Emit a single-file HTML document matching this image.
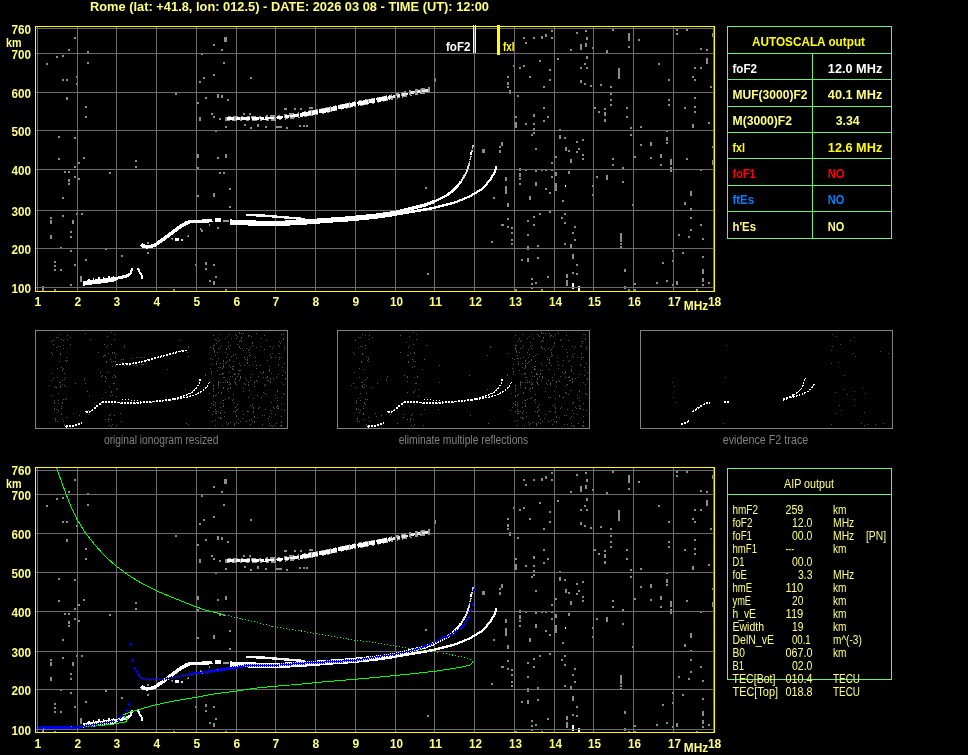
<!DOCTYPE html>
<html lang="en"><head><meta charset="utf-8"><title>Ionogram - Rome - AUTOSCALA / AIP output</title>
<style>html,body{margin:0;padding:0;background:#000;overflow:hidden}svg{display:block;font-family:"Liberation Sans",sans-serif;font-size:12px;font-weight:700;will-change:transform;-webkit-font-smoothing:antialiased}</style></head><body>
<svg width="968" height="755" viewBox="0 0 968 755">
<rect x="0" y="0" width="968" height="755" fill="#000"/>
<text x="90" y="11" fill="#ffff80" textLength="399" lengthAdjust="spacingAndGlyphs">Rome (lat: +41.8, lon: 012.5) - DATE: 2026 03 08 - TIME (UT): 12:00</text>
<!-- top ionogram -->
<g shape-rendering="crispEdges" fill="#8c8c8c">
<rect x="523" y="37" width="1.5" height="1.6"/>
<rect x="525" y="42" width="1.5" height="1.6"/>
<rect x="533" y="37" width="1.5" height="1.6"/>
<rect x="541" y="36" width="1.5" height="3"/>
<rect x="545" y="34" width="1.5" height="3"/>
<rect x="551" y="30" width="1.5" height="1.6"/>
<rect x="551" y="37" width="1.5" height="1.6"/>
<rect x="576" y="32" width="1.5" height="1.6"/>
<rect x="585" y="30" width="1.5" height="1.6"/>
<rect x="586" y="37" width="1.5" height="3"/>
<rect x="580" y="44" width="1.5" height="6"/>
<rect x="585" y="43" width="1.5" height="4"/>
<rect x="570" y="49" width="1.5" height="1.6"/>
<rect x="592" y="47" width="1.5" height="1.6"/>
<rect x="612" y="29" width="1.5" height="1.6"/>
<rect x="628" y="33" width="1.5" height="8"/>
<rect x="628" y="46" width="1.5" height="1.6"/>
<rect x="606" y="50" width="1.5" height="3"/>
<rect x="638" y="39" width="1.5" height="1.6"/>
<rect x="676" y="29" width="1.5" height="1.6"/>
<rect x="676" y="33" width="1.5" height="1.6"/>
<rect x="686" y="29" width="1.5" height="1.6"/>
<rect x="700" y="48" width="1.5" height="1.6"/>
<rect x="706" y="49" width="1.5" height="1.6"/>
<rect x="712" y="33" width="1.5" height="4"/>
<rect x="513" y="65" width="1.5" height="1.6"/>
<rect x="519" y="67" width="1.5" height="1.6"/>
<rect x="523" y="65" width="1.5" height="1.6"/>
<rect x="539" y="60" width="1.5" height="1.6"/>
<rect x="549" y="69" width="1.5" height="1.6"/>
<rect x="529" y="76" width="1.5" height="1.6"/>
<rect x="549" y="79" width="1.5" height="1.6"/>
<rect x="543" y="86" width="1.5" height="1.6"/>
<rect x="507" y="76" width="1.5" height="1.6"/>
<rect x="507" y="82" width="1.5" height="3"/>
<rect x="507" y="86" width="1.5" height="1.6"/>
<rect x="509" y="90" width="1.5" height="4"/>
<rect x="557" y="58" width="1.5" height="1.6"/>
<rect x="586" y="56" width="1.5" height="3"/>
<rect x="584" y="63" width="1.5" height="1.6"/>
<rect x="580" y="67" width="1.5" height="1.6"/>
<rect x="586" y="67" width="1.5" height="1.6"/>
<rect x="580" y="80" width="1.5" height="3"/>
<rect x="584" y="83" width="1.5" height="1.6"/>
<rect x="590" y="85" width="1.5" height="1.6"/>
<rect x="618" y="68" width="1.5" height="9"/>
<rect x="618" y="77" width="1.5" height="1.6"/>
<rect x="600" y="84" width="1.5" height="1.6"/>
<rect x="610" y="86" width="1.5" height="1.6"/>
<rect x="658" y="63" width="1.5" height="1.6"/>
<rect x="668" y="79" width="1.5" height="1.6"/>
<rect x="706" y="58" width="1.5" height="6"/>
<rect x="700" y="67" width="1.5" height="1.6"/>
<rect x="694" y="67" width="1.5" height="1.6"/>
<rect x="692" y="76" width="1.5" height="1.6"/>
<rect x="694" y="79" width="1.5" height="1.6"/>
<rect x="710" y="86" width="1.5" height="1.6"/>
<rect x="517" y="95" width="1.5" height="1.6"/>
<rect x="543" y="107" width="1.5" height="1.6"/>
<rect x="533" y="114" width="1.5" height="3"/>
<rect x="547" y="116" width="1.5" height="1.6"/>
<rect x="543" y="120" width="1.5" height="1.6"/>
<rect x="515" y="116" width="1.5" height="1.6"/>
<rect x="515" y="122" width="1.5" height="6"/>
<rect x="525" y="123" width="1.5" height="1.6"/>
<rect x="533" y="123" width="1.5" height="1.6"/>
<rect x="533" y="128" width="1.5" height="3"/>
<rect x="610" y="93" width="1.5" height="1.6"/>
<rect x="610" y="99" width="1.5" height="1.6"/>
<rect x="610" y="104" width="1.5" height="1.6"/>
<rect x="594" y="107" width="1.5" height="1.6"/>
<rect x="598" y="111" width="1.5" height="1.6"/>
<rect x="604" y="108" width="1.5" height="1.6"/>
<rect x="604" y="112" width="1.5" height="4"/>
<rect x="604" y="119" width="1.5" height="3"/>
<rect x="626" y="107" width="1.5" height="1.6"/>
<rect x="626" y="116" width="1.5" height="1.6"/>
<rect x="630" y="127" width="1.5" height="1.6"/>
<rect x="640" y="126" width="1.5" height="1.6"/>
<rect x="668" y="99" width="1.5" height="1.6"/>
<rect x="668" y="104" width="1.5" height="1.6"/>
<rect x="694" y="97" width="1.5" height="1.6"/>
<rect x="694" y="106" width="1.5" height="1.6"/>
<rect x="694" y="111" width="1.5" height="1.6"/>
<rect x="684" y="107" width="1.5" height="1.6"/>
<rect x="692" y="124" width="1.5" height="4"/>
<rect x="708" y="122" width="1.5" height="1.6"/>
<rect x="483" y="149" width="1.5" height="4"/>
<rect x="501" y="142" width="1.5" height="4"/>
<rect x="499" y="146" width="1.5" height="1.6"/>
<rect x="499" y="150" width="1.5" height="1.6"/>
<rect x="531" y="134" width="1.5" height="1.6"/>
<rect x="533" y="132" width="1.5" height="1.6"/>
<rect x="535" y="148" width="1.5" height="1.6"/>
<rect x="551" y="162" width="1.5" height="1.6"/>
<rect x="559" y="129" width="1.5" height="1.6"/>
<rect x="559" y="135" width="1.5" height="4"/>
<rect x="564" y="137" width="1.5" height="1.6"/>
<rect x="576" y="141" width="1.5" height="1.6"/>
<rect x="582" y="139" width="1.5" height="1.6"/>
<rect x="565" y="147" width="1.5" height="4"/>
<rect x="568" y="150" width="1.5" height="1.6"/>
<rect x="578" y="148" width="1.5" height="1.6"/>
<rect x="576" y="151" width="1.5" height="1.6"/>
<rect x="582" y="154" width="1.5" height="1.6"/>
<rect x="582" y="158" width="1.5" height="1.6"/>
<rect x="570" y="159" width="1.5" height="4"/>
<rect x="555" y="156" width="1.5" height="1.6"/>
<rect x="630" y="134" width="1.5" height="1.6"/>
<rect x="612" y="158" width="1.5" height="1.6"/>
<rect x="612" y="164" width="1.5" height="1.6"/>
<rect x="622" y="167" width="1.5" height="1.6"/>
<rect x="634" y="156" width="1.5" height="1.6"/>
<rect x="640" y="144" width="1.5" height="1.6"/>
<rect x="650" y="142" width="1.5" height="4"/>
<rect x="650" y="157" width="1.5" height="1.6"/>
<rect x="660" y="154" width="1.5" height="4"/>
<rect x="660" y="164" width="1.5" height="1.6"/>
<rect x="666" y="130" width="1.5" height="1.6"/>
<rect x="666" y="137" width="1.5" height="4"/>
<rect x="666" y="142" width="1.5" height="1.6"/>
<rect x="670" y="159" width="1.5" height="6"/>
<rect x="670" y="167" width="1.5" height="4"/>
<rect x="670" y="170" width="1.5" height="1.6"/>
<rect x="686" y="158" width="1.5" height="1.6"/>
<rect x="712" y="146" width="1.5" height="1.6"/>
<rect x="712" y="160" width="1.5" height="5"/>
<rect x="519" y="168" width="1.5" height="3"/>
<rect x="519" y="173" width="1.5" height="4"/>
<rect x="519" y="178" width="1.5" height="1.6"/>
<rect x="519" y="183" width="1.5" height="1.6"/>
<rect x="525" y="169" width="1.5" height="1.6"/>
<rect x="535" y="170" width="1.5" height="1.6"/>
<rect x="541" y="169" width="1.5" height="1.6"/>
<rect x="545" y="169" width="1.5" height="1.6"/>
<rect x="551" y="169" width="1.5" height="1.6"/>
<rect x="551" y="176" width="1.5" height="1.6"/>
<rect x="535" y="182" width="1.5" height="4"/>
<rect x="545" y="188" width="1.5" height="1.6"/>
<rect x="549" y="192" width="1.5" height="1.6"/>
<rect x="529" y="196" width="1.5" height="4"/>
<rect x="505" y="177" width="1.5" height="4"/>
<rect x="505" y="186" width="1.5" height="6"/>
<rect x="505" y="192" width="1.5" height="1.6"/>
<rect x="507" y="203" width="1.5" height="4"/>
<rect x="493" y="197" width="1.5" height="1.6"/>
<rect x="555" y="172" width="1.5" height="4"/>
<rect x="555" y="183" width="1.5" height="8"/>
<rect x="568" y="171" width="1.5" height="3"/>
<rect x="562" y="200" width="1.5" height="1.6"/>
<rect x="596" y="176" width="1.5" height="1.6"/>
<rect x="606" y="175" width="1.5" height="5"/>
<rect x="592" y="185" width="1.5" height="1.6"/>
<rect x="592" y="194" width="1.5" height="1.6"/>
<rect x="622" y="181" width="1.5" height="1.6"/>
<rect x="690" y="191" width="1.5" height="5"/>
<rect x="700" y="169" width="1.5" height="1.6"/>
<rect x="684" y="203" width="1.5" height="1.6"/>
<rect x="632" y="204" width="1.5" height="1.6"/>
<rect x="507" y="218" width="1.5" height="1.6"/>
<rect x="501" y="224" width="3" height="1.6"/>
<rect x="507" y="226" width="1.5" height="1.6"/>
<rect x="511" y="227" width="1.5" height="1.6"/>
<rect x="511" y="232" width="1.5" height="1.6"/>
<rect x="511" y="239" width="1.5" height="1.6"/>
<rect x="511" y="243" width="1.5" height="1.6"/>
<rect x="491" y="241" width="1.5" height="1.6"/>
<rect x="527" y="220" width="1.5" height="1.6"/>
<rect x="533" y="216" width="1.5" height="1.6"/>
<rect x="539" y="213" width="1.5" height="1.6"/>
<rect x="549" y="211" width="1.5" height="1.6"/>
<rect x="533" y="224" width="1.5" height="1.6"/>
<rect x="527" y="234" width="1.5" height="1.6"/>
<rect x="527" y="246" width="1.5" height="1.6"/>
<rect x="537" y="245" width="1.5" height="1.6"/>
<rect x="527" y="248" width="1.5" height="1.6"/>
<rect x="521" y="259" width="1.5" height="1.6"/>
<rect x="527" y="258" width="1.5" height="4"/>
<rect x="537" y="257" width="1.5" height="1.6"/>
<rect x="531" y="278" width="1.5" height="1.6"/>
<rect x="535" y="282" width="1.5" height="1.6"/>
<rect x="531" y="283" width="1.5" height="1.6"/>
<rect x="547" y="276" width="1.5" height="1.6"/>
<rect x="515" y="289" width="1.5" height="1.6"/>
<rect x="531" y="287" width="1.5" height="1.6"/>
<rect x="541" y="289" width="1.5" height="1.6"/>
<rect x="564" y="213" width="1.5" height="1.6"/>
<rect x="561" y="217" width="1.5" height="1.6"/>
<rect x="564" y="222" width="1.5" height="1.6"/>
<rect x="574" y="226" width="1.5" height="1.6"/>
<rect x="572" y="232" width="1.5" height="1.6"/>
<rect x="574" y="239" width="1.5" height="1.6"/>
<rect x="570" y="244" width="1.5" height="4"/>
<rect x="564" y="243" width="1.5" height="1.6"/>
<rect x="572" y="254" width="1.5" height="5"/>
<rect x="576" y="264" width="1.5" height="1.6"/>
<rect x="572" y="272" width="1.5" height="1.6"/>
<rect x="576" y="273" width="1.5" height="1.6"/>
<rect x="566" y="274" width="1.5" height="4"/>
<rect x="566" y="280" width="1.5" height="6"/>
<rect x="620" y="233" width="1.5" height="9"/>
<rect x="620" y="243" width="1.5" height="1.6"/>
<rect x="620" y="246" width="1.5" height="1.6"/>
<rect x="624" y="269" width="1.5" height="3"/>
<rect x="624" y="286" width="1.5" height="3"/>
<rect x="628" y="289" width="1.5" height="1.6"/>
<rect x="634" y="283" width="1.5" height="1.6"/>
<rect x="634" y="289" width="1.5" height="1.6"/>
<rect x="656" y="282" width="1.5" height="1.6"/>
<rect x="662" y="262" width="1.5" height="1.6"/>
<rect x="666" y="280" width="1.5" height="1.6"/>
<rect x="672" y="250" width="1.5" height="1.6"/>
<rect x="672" y="260" width="1.5" height="1.6"/>
<rect x="672" y="284" width="1.5" height="1.6"/>
<rect x="676" y="281" width="1.5" height="4"/>
<rect x="682" y="252" width="1.5" height="1.6"/>
<rect x="678" y="234" width="1.5" height="1.6"/>
<rect x="688" y="236" width="1.5" height="1.6"/>
<rect x="690" y="229" width="1.5" height="1.6"/>
<rect x="690" y="217" width="1.5" height="1.6"/>
<rect x="700" y="224" width="1.5" height="1.6"/>
<rect x="702" y="238" width="1.5" height="1.6"/>
<rect x="702" y="256" width="1.5" height="1.6"/>
<rect x="702" y="269" width="1.5" height="5"/>
<rect x="702" y="278" width="1.5" height="4"/>
<rect x="702" y="284" width="1.5" height="1.6"/>
<rect x="708" y="282" width="1.5" height="1.6"/>
<rect x="696" y="289" width="1.5" height="1.6"/>
<rect x="690" y="208" width="1.5" height="1.6"/>
<rect x="684" y="202" width="1.5" height="1.6"/>
<rect x="74" y="37" width="1.5" height="1.6"/>
<rect x="68" y="49" width="1.5" height="1.6"/>
<rect x="87" y="51" width="1.5" height="1.6"/>
<rect x="56" y="56" width="1.5" height="1.6"/>
<rect x="62" y="55" width="1.5" height="1.6"/>
<rect x="46" y="63" width="1.5" height="1.6"/>
<rect x="87" y="62" width="1.5" height="1.6"/>
<rect x="62" y="79" width="1.5" height="1.6"/>
<rect x="66" y="79" width="1.5" height="1.6"/>
<rect x="76" y="76" width="1.5" height="1.6"/>
<rect x="76" y="83" width="1.5" height="1.6"/>
<rect x="66" y="97" width="1.5" height="3"/>
<rect x="85" y="106" width="1.5" height="1.6"/>
<rect x="85" y="116" width="1.5" height="1.6"/>
<rect x="175" y="93" width="1.5" height="1.6"/>
<rect x="224" y="37" width="3" height="5"/>
<rect x="213" y="44" width="1.5" height="1.6"/>
<rect x="221" y="49" width="1.5" height="1.6"/>
<rect x="201" y="53" width="1.5" height="1.6"/>
<rect x="223" y="62" width="1.5" height="1.6"/>
<rect x="213" y="74" width="1.5" height="1.6"/>
<rect x="203" y="77" width="1.5" height="1.6"/>
<rect x="199" y="81" width="1.5" height="1.6"/>
<rect x="217" y="94" width="1.5" height="4"/>
<rect x="221" y="95" width="1.5" height="1.6"/>
<rect x="205" y="97" width="1.5" height="1.6"/>
<rect x="227" y="99" width="1.5" height="1.6"/>
<rect x="197" y="102" width="1.5" height="1.6"/>
<rect x="211" y="113" width="1.5" height="1.6"/>
<rect x="213" y="116" width="1.5" height="1.6"/>
<rect x="199" y="117" width="1.5" height="4"/>
<rect x="219" y="118" width="1.5" height="1.6"/>
<rect x="225" y="117" width="1.5" height="4"/>
<rect x="58" y="136" width="1.5" height="1.6"/>
<rect x="74" y="137" width="1.5" height="1.6"/>
<rect x="58" y="158" width="1.5" height="1.6"/>
<rect x="83" y="157" width="1.5" height="1.6"/>
<rect x="78" y="162" width="1.5" height="1.6"/>
<rect x="74" y="166" width="1.5" height="1.6"/>
<rect x="64" y="171" width="1.5" height="1.6"/>
<rect x="68" y="171" width="1.5" height="1.6"/>
<rect x="74" y="176" width="1.5" height="1.6"/>
<rect x="78" y="178" width="1.5" height="1.6"/>
<rect x="68" y="179" width="1.5" height="3"/>
<rect x="68" y="183" width="1.5" height="1.6"/>
<rect x="109" y="172" width="1.5" height="1.6"/>
<rect x="135" y="160" width="1.5" height="1.6"/>
<rect x="135" y="166" width="1.5" height="1.6"/>
<rect x="62" y="197" width="1.5" height="1.6"/>
<rect x="50" y="217" width="1.5" height="1.6"/>
<rect x="50" y="220" width="1.5" height="4"/>
<rect x="62" y="215" width="1.5" height="1.6"/>
<rect x="72" y="220" width="1.5" height="4"/>
<rect x="76" y="213" width="1.5" height="1.6"/>
<rect x="81" y="213" width="1.5" height="1.6"/>
<rect x="70" y="231" width="1.5" height="1.6"/>
<rect x="70" y="236" width="1.5" height="1.6"/>
<rect x="50" y="235" width="1.5" height="4"/>
<rect x="60" y="247" width="1.5" height="1.6"/>
<rect x="70" y="250" width="1.5" height="1.6"/>
<rect x="105" y="248" width="1.5" height="1.6"/>
<rect x="121" y="255" width="1.5" height="1.6"/>
<rect x="85" y="259" width="1.5" height="1.6"/>
<rect x="54" y="261" width="1.5" height="1.6"/>
<rect x="54" y="265" width="1.5" height="1.6"/>
<rect x="54" y="269" width="1.5" height="1.6"/>
<rect x="60" y="269" width="1.5" height="1.6"/>
<rect x="74" y="264" width="1.5" height="1.6"/>
<rect x="80" y="276" width="1.5" height="6"/>
<rect x="70" y="284" width="1.5" height="1.6"/>
<rect x="42" y="286" width="1.5" height="5"/>
<rect x="54" y="289" width="1.5" height="1.6"/>
<rect x="147" y="242" width="1.5" height="1.6"/>
<rect x="147" y="252" width="1.5" height="1.6"/>
<rect x="197" y="154" width="1.5" height="4"/>
<rect x="197" y="167" width="1.5" height="1.6"/>
<rect x="217" y="157" width="1.5" height="1.6"/>
<rect x="225" y="154" width="1.5" height="4"/>
<rect x="219" y="172" width="1.5" height="1.6"/>
<rect x="223" y="172" width="1.5" height="1.6"/>
<rect x="229" y="188" width="1.5" height="1.6"/>
<rect x="213" y="193" width="1.5" height="4"/>
<rect x="197" y="195" width="1.5" height="1.6"/>
<rect x="229" y="206" width="1.5" height="1.6"/>
<rect x="195" y="264" width="1.5" height="1.6"/>
<rect x="205" y="262" width="1.5" height="1.6"/>
<rect x="205" y="268" width="1.5" height="1.6"/>
<rect x="213" y="264" width="1.5" height="1.6"/>
<rect x="215" y="276" width="1.5" height="1.6"/>
<rect x="209" y="280" width="1.5" height="1.6"/>
<rect x="213" y="281" width="1.5" height="4"/>
<rect x="173" y="289" width="1.5" height="1.6"/>
<rect x="225" y="289" width="1.5" height="1.6"/>
<rect x="205" y="97" width="1.5" height="1.6"/>
<rect x="217" y="94" width="1.5" height="1.6"/>
<rect x="221" y="96" width="1.5" height="1.6"/>
<rect x="211" y="113" width="1.5" height="1.6"/>
<rect x="225" y="117" width="1.5" height="1.6"/>
<rect x="225" y="126" width="1.5" height="1.6"/>
<rect x="215" y="130" width="1.5" height="1.6"/>
<rect x="225" y="154" width="1.5" height="3"/>
<rect x="217" y="157" width="1.5" height="1.6"/>
<rect x="219" y="172" width="1.5" height="1.6"/>
<rect x="223" y="172" width="1.5" height="1.6"/>
<rect x="229" y="188" width="1.5" height="1.6"/>
<rect x="213" y="193" width="1.5" height="4"/>
<rect x="229" y="206" width="1.5" height="1.6"/>
<rect x="201" y="230" width="1.5" height="1.6"/>
<rect x="217" y="227" width="1.5" height="1.6"/>
<rect x="205" y="263" width="1.5" height="1.6"/>
<rect x="213" y="264" width="1.5" height="1.6"/>
<rect x="425" y="187" width="1.5" height="1.6"/>
<rect x="244" y="124" width="1.5" height="1.6"/>
<rect x="250" y="127" width="1.5" height="1.6"/>
<rect x="257" y="124" width="1.5" height="3"/>
<rect x="265" y="126" width="1.5" height="1.6"/>
<rect x="276" y="126" width="6" height="1.6"/>
<rect x="286" y="127" width="1.5" height="1.6"/>
<rect x="299" y="125" width="1.5" height="1.6"/>
<rect x="303" y="125" width="1.5" height="1.6"/>
<rect x="306" y="125" width="1.5" height="1.6"/>
<rect x="284" y="108" width="3" height="1.6"/>
<rect x="294" y="108" width="1.5" height="1.6"/>
<rect x="300" y="108" width="1.5" height="1.6"/>
<rect x="309" y="107" width="4" height="1.6"/>
<rect x="243" y="113" width="1.5" height="1.6"/>
<rect x="249" y="113" width="1.5" height="1.6"/>
<rect x="250" y="77" width="1.5" height="1.6"/>
<rect x="434" y="78" width="1.5" height="4"/>
<rect x="482" y="149" width="1.5" height="4"/>
<rect x="425" y="187" width="1.5" height="1.6"/>
<rect x="483" y="149" width="1.5" height="4"/>
<rect x="501" y="142" width="1.5" height="4"/>
<rect x="499" y="151" width="1.5" height="1.6"/>
<rect x="493" y="197" width="1.5" height="1.6"/>
<rect x="491" y="241" width="1.5" height="1.6"/>
<rect x="427" y="273" width="1.5" height="1.6"/>
</g>
<g shape-rendering="crispEdges" fill="#fff">
<rect x="565" y="185" width="1" height="2"/>
<rect x="572" y="283" width="2" height="6"/>
<rect x="578" y="286" width="2" height="5"/>
</g>
<g shape-rendering="crispEdges">
<rect x="37" y="27" width="1" height="264" fill="#6c6c6c"/>
<rect x="77" y="27" width="1" height="264" fill="#6c6c6c"/>
<rect x="116" y="27" width="1" height="264" fill="#6c6c6c"/>
<rect x="156" y="27" width="1" height="264" fill="#6c6c6c"/>
<rect x="196" y="27" width="1" height="264" fill="#6c6c6c"/>
<rect x="236" y="27" width="1" height="264" fill="#6c6c6c"/>
<rect x="275" y="27" width="1" height="264" fill="#6c6c6c"/>
<rect x="315" y="27" width="1" height="264" fill="#6c6c6c"/>
<rect x="355" y="27" width="1" height="264" fill="#6c6c6c"/>
<rect x="395" y="27" width="1" height="264" fill="#6c6c6c"/>
<rect x="434" y="27" width="1" height="264" fill="#6c6c6c"/>
<rect x="474" y="27" width="1" height="264" fill="#6c6c6c"/>
<rect x="514" y="27" width="1" height="264" fill="#6c6c6c"/>
<rect x="554" y="27" width="1" height="264" fill="#6c6c6c"/>
<rect x="593" y="27" width="1" height="264" fill="#6c6c6c"/>
<rect x="633" y="27" width="1" height="264" fill="#6c6c6c"/>
<rect x="673" y="27" width="1" height="264" fill="#6c6c6c"/>
<rect x="713" y="27" width="1" height="264" fill="#6c6c6c"/>
<rect x="36" y="28" width="678" height="1" fill="#6c6c6c"/>
<rect x="36" y="53" width="678" height="1" fill="#6c6c6c"/>
<rect x="36" y="92" width="678" height="1" fill="#6c6c6c"/>
<rect x="36" y="130" width="678" height="1" fill="#6c6c6c"/>
<rect x="36" y="169" width="678" height="1" fill="#6c6c6c"/>
<rect x="36" y="210" width="678" height="1" fill="#6c6c6c"/>
<rect x="36" y="248" width="678" height="1" fill="#6c6c6c"/>
<rect x="36" y="287" width="678" height="1" fill="#6c6c6c"/>
</g>
<g shape-rendering="crispEdges">
<polyline points="227.5,118.5 250,118.75 275,118 300,115 325,110.5 350,105 375,100.5 390,97.5 412.5,92.5 430,90" fill="none" stroke="#9a9a9a" stroke-width="5.5" stroke-linejoin="round" stroke-linecap="butt" stroke-dasharray="3 2 5 3 2 4"/>
<polyline points="227.5,118.5 250,118.75 275,118 300,115" fill="none" stroke="#fff" stroke-width="2.6" stroke-linejoin="round" stroke-linecap="butt" stroke-dasharray="7 1.5 4 1 9 2"/>
<polyline points="300,115 325,110.5 350,105 375,100.5 390,97.5" fill="none" stroke="#fff" stroke-width="4.2" stroke-linejoin="round" stroke-linecap="butt" stroke-dasharray="11 1 6 1.5"/>
<polyline points="390,97.5 412.5,92.5 430,90" fill="none" stroke="#e8e8e8" stroke-width="2.4" stroke-linejoin="round" stroke-linecap="butt" stroke-dasharray="5 2 3 2 6 3"/>
<polyline points="141.5,244 143,246 147,246.8 151,246.3 155,245 158,243 161.25,240.6 167.5,236.25 173.75,231.25 180,226.9 186.25,223.1 190,221.7 200,221.5 212.5,220.4" fill="none" stroke="#fff" stroke-width="3.6" stroke-linejoin="round" stroke-linecap="butt" />
<polyline points="215,220 221,220" fill="none" stroke="#fff" stroke-width="3.4" stroke-linejoin="round" stroke-linecap="butt" />
<polyline points="175,239.4 179.4,239.4" fill="none" stroke="#fff" stroke-width="2.4" stroke-linejoin="round" stroke-linecap="butt" />
<polyline points="180.6,239.6 182.5,239.6" fill="none" stroke="#ddd" stroke-width="1.8" stroke-linejoin="round" stroke-linecap="butt" />
<polyline points="171.5,239 188,236.5 192,235 194.5,232 200,228 202,231.5 204,224 207.5,224.5 218,228" fill="none" stroke="#9a9a9a" stroke-width="1.6" stroke-linejoin="round" stroke-linecap="butt" stroke-dasharray="1.6 14.5"/>
<polyline points="230,222 250,223 275,223.5 300,222.5 325,220.5 350,218.75 375,216.25 395,213.5" fill="none" stroke="#fff" stroke-width="5.2" stroke-linejoin="round" stroke-linecap="butt" />
<polyline points="223,221 229,220.8" fill="none" stroke="#9a9a9a" stroke-width="1.4" stroke-linejoin="round" stroke-linecap="butt" />
<polyline points="246,215 262,215.5 280,217 305,219" fill="none" stroke="#f4f4f4" stroke-width="2.4" stroke-linejoin="round" stroke-linecap="butt" />
<polyline points="380,215.5 395,212.5 410,208.75 425,205 435,201.25" fill="none" stroke="#fff" stroke-width="3.2" stroke-linejoin="round" stroke-linecap="butt" />
<polyline points="435,201.25 447.5,195 455,188.75 461.25,181.25" fill="none" stroke="#fff" stroke-width="2.6" stroke-linejoin="round" stroke-linecap="butt" />
<polyline points="461.25,181.25 466.25,172.5 468.75,165" fill="none" stroke="#e0e0e0" stroke-width="2" stroke-linejoin="round" stroke-linecap="butt" />
<polyline points="468.75,165 471.25,155 473,145" fill="none" stroke="#c4c4c4" stroke-width="1.6" stroke-linejoin="round" stroke-linecap="butt" stroke-dasharray="4 1.5"/>
<rect x="470" y="152" width="2" height="3" fill="#fff"/>
<polyline points="380,216.5 395,214.5 430,208.75 455,202.5" fill="none" stroke="#fff" stroke-width="2.6" stroke-linejoin="round" stroke-linecap="butt" />
<polyline points="455,202.5 470,196.25 482.5,188.75 490,180 494.5,172.5 496.5,166.5" fill="none" stroke="#fff" stroke-width="2.2" stroke-linejoin="round" stroke-linecap="butt" />
<polyline points="83,283.5 89,282.5 100,281.3 110,280 116,278.8" fill="none" stroke="#fff" stroke-width="4.6" stroke-linejoin="round" stroke-linecap="butt" />
<polyline points="115,278.6 125,276.5 130,274.5" fill="none" stroke="#fff" stroke-width="3" stroke-linejoin="round" stroke-linecap="butt" />
<polyline points="88,280.5 96,278.5 108,277.5 116,276.5" fill="none" stroke="#fff" stroke-width="2" stroke-linejoin="round" stroke-linecap="butt" stroke-dasharray="2 3 1 4"/>
<polyline points="130,274.5 131.5,271 132.3,268" fill="none" stroke="#fff" stroke-width="2.2" stroke-linejoin="round" stroke-linecap="butt" />
<polyline points="138,268 139.5,272 142,276 142.3,279" fill="none" stroke="#fff" stroke-width="2" stroke-linejoin="round" stroke-linecap="butt" />
</g>
<g shape-rendering="crispEdges">
<rect x="35" y="26" width="680" height="1" fill="#ffff00"/>
<rect x="35" y="291" width="680" height="1" fill="#ffff00"/>
<rect x="35" y="26" width="1" height="266" fill="#ffff00"/>
<rect x="714" y="26" width="1" height="266" fill="#ffff00"/>
</g>
<g shape-rendering="crispEdges">
<rect x="473" y="25" width="1" height="28" fill="#fff"/>
<rect x="475" y="25" width="1" height="28" fill="#fff"/>
<rect x="497" y="25" width="3" height="30" fill="#ffff00"/>
</g>
<text x="446" y="51" fill="#fff" textLength="24.5" lengthAdjust="spacingAndGlyphs">foF2</text>
<text x="503" y="51" fill="#ffff00" textLength="11.5" lengthAdjust="spacingAndGlyphs">fxI</text>
<text x="31" y="34" fill="#ffff80" text-anchor="end" textLength="19.5" lengthAdjust="spacingAndGlyphs">760</text>
<text x="6" y="47" fill="#ffff80" textLength="15.5" lengthAdjust="spacingAndGlyphs">km</text>
<text x="31" y="59" fill="#ffff80" text-anchor="end" textLength="19.5" lengthAdjust="spacingAndGlyphs">700</text>
<text x="31" y="98" fill="#ffff80" text-anchor="end" textLength="19.5" lengthAdjust="spacingAndGlyphs">600</text>
<text x="31" y="136" fill="#ffff80" text-anchor="end" textLength="19.5" lengthAdjust="spacingAndGlyphs">500</text>
<text x="31" y="175" fill="#ffff80" text-anchor="end" textLength="19.5" lengthAdjust="spacingAndGlyphs">400</text>
<text x="31" y="216" fill="#ffff80" text-anchor="end" textLength="19.5" lengthAdjust="spacingAndGlyphs">300</text>
<text x="31" y="254" fill="#ffff80" text-anchor="end" textLength="19.5" lengthAdjust="spacingAndGlyphs">200</text>
<text x="31" y="293" fill="#ffff80" text-anchor="end" textLength="19.5" lengthAdjust="spacingAndGlyphs">100</text>
<text x="37.8" y="306" fill="#ffff80" text-anchor="middle">1</text>
<text x="77.8" y="306" fill="#ffff80" text-anchor="middle">2</text>
<text x="116.8" y="306" fill="#ffff80" text-anchor="middle">3</text>
<text x="156.8" y="306" fill="#ffff80" text-anchor="middle">4</text>
<text x="196.8" y="306" fill="#ffff80" text-anchor="middle">5</text>
<text x="236.8" y="306" fill="#ffff80" text-anchor="middle">6</text>
<text x="275.8" y="306" fill="#ffff80" text-anchor="middle">7</text>
<text x="315.8" y="306" fill="#ffff80" text-anchor="middle">8</text>
<text x="355.8" y="306" fill="#ffff80" text-anchor="middle">9</text>
<text x="396.6" y="306" fill="#ffff80" text-anchor="middle" textLength="13" lengthAdjust="spacingAndGlyphs">10</text>
<text x="435.6" y="306" fill="#ffff80" text-anchor="middle" textLength="13" lengthAdjust="spacingAndGlyphs">11</text>
<text x="475.6" y="306" fill="#ffff80" text-anchor="middle" textLength="13" lengthAdjust="spacingAndGlyphs">12</text>
<text x="515.6" y="306" fill="#ffff80" text-anchor="middle" textLength="13" lengthAdjust="spacingAndGlyphs">13</text>
<text x="555.6" y="306" fill="#ffff80" text-anchor="middle" textLength="13" lengthAdjust="spacingAndGlyphs">14</text>
<text x="594.6" y="306" fill="#ffff80" text-anchor="middle" textLength="13" lengthAdjust="spacingAndGlyphs">15</text>
<text x="634.6" y="306" fill="#ffff80" text-anchor="middle" textLength="13" lengthAdjust="spacingAndGlyphs">16</text>
<text x="674.6" y="306" fill="#ffff80" text-anchor="middle" textLength="13" lengthAdjust="spacingAndGlyphs">17</text>
<text x="721.3" y="306" fill="#ffff80" text-anchor="end" textLength="13.4" lengthAdjust="spacingAndGlyphs">18</text>
<text x="683.8" y="310" fill="#ffff80" textLength="24.4" lengthAdjust="spacingAndGlyphs">MHz</text>
<g shape-rendering="crispEdges">
<rect x="727" y="26" width="165" height="1" fill="#6cf07c"/>
<rect x="727" y="53" width="165" height="1" fill="#6cf07c"/>
<rect x="727" y="79" width="165" height="1" fill="#6cf07c"/>
<rect x="727" y="106" width="165" height="1" fill="#6cf07c"/>
<rect x="727" y="132" width="165" height="1" fill="#6cf07c"/>
<rect x="727" y="158" width="165" height="1" fill="#6cf07c"/>
<rect x="727" y="185" width="165" height="1" fill="#6cf07c"/>
<rect x="727" y="211" width="165" height="1" fill="#6cf07c"/>
<rect x="727" y="238" width="165" height="1" fill="#6cf07c"/>
<rect x="727" y="26" width="1" height="213" fill="#6cf07c"/>
<rect x="891" y="26" width="1" height="213" fill="#6cf07c"/>
<rect x="812" y="53" width="1" height="186" fill="#6cf07c"/>
</g>
<text x="752" y="46" fill="#ffff00" textLength="113" lengthAdjust="spacingAndGlyphs">AUTOSCALA output</text>
<text x="732.5" y="73" fill="#fff" textLength="24.5" lengthAdjust="spacingAndGlyphs">foF2</text>
<text x="827.8" y="73" fill="#fff" textLength="54.5" lengthAdjust="spacingAndGlyphs">12.0 MHz</text>
<text x="732.5" y="99" fill="#ffff80" textLength="75" lengthAdjust="spacingAndGlyphs">MUF(3000)F2</text>
<text x="827.8" y="99" fill="#ffff80" textLength="54.5" lengthAdjust="spacingAndGlyphs">40.1 MHz</text>
<text x="732.5" y="125" fill="#ffff80" textLength="59.5" lengthAdjust="spacingAndGlyphs">M(3000)F2</text>
<text x="835.7" y="125" fill="#ffff80" textLength="24" lengthAdjust="spacingAndGlyphs">3.34</text>
<text x="732.5" y="152" fill="#ffff00" textLength="12.5" lengthAdjust="spacingAndGlyphs">fxI</text>
<text x="827.8" y="152" fill="#ffff00" textLength="54.5" lengthAdjust="spacingAndGlyphs">12.6 MHz</text>
<text x="732.5" y="178" fill="#ff0000" textLength="23" lengthAdjust="spacingAndGlyphs">foF1</text>
<text x="827.8" y="178" fill="#ff0000" textLength="16.5" lengthAdjust="spacingAndGlyphs">NO</text>
<text x="732.5" y="204" fill="#0080ff" textLength="21.5" lengthAdjust="spacingAndGlyphs">ftEs</text>
<text x="827.8" y="204" fill="#0080ff" textLength="16.5" lengthAdjust="spacingAndGlyphs">NO</text>
<text x="732.5" y="231" fill="#ffff80" textLength="23.5" lengthAdjust="spacingAndGlyphs">h'Es</text>
<text x="827.8" y="231" fill="#ffff80" textLength="16.5" lengthAdjust="spacingAndGlyphs">NO</text>
<!-- thumbnails -->
<g shape-rendering="crispEdges">
<rect x="35.5" y="330.5" width="252" height="98" fill="none" stroke="#808080" stroke-width="1"/>
</g>
<g shape-rendering="crispEdges" fill="#505050">
<rect x="239" y="332" width="1" height="1"/>
<rect x="239" y="333" width="1" height="1"/>
<rect x="241" y="333" width="1" height="1"/>
<rect x="235" y="334" width="1" height="1"/>
<rect x="243" y="333" width="1" height="1"/>
<rect x="256" y="333" width="1" height="1"/>
<rect x="248" y="335" width="1" height="1"/>
<rect x="248" y="336" width="1" height="1"/>
<rect x="281" y="334" width="1" height="1"/>
<rect x="283" y="334" width="1" height="1"/>
<rect x="216" y="340" width="1" height="1"/>
<rect x="218" y="341" width="1" height="1"/>
<rect x="219" y="340" width="1" height="1"/>
<rect x="225" y="338" width="1" height="1"/>
<rect x="228" y="342" width="1" height="1"/>
<rect x="221" y="345" width="1" height="1"/>
<rect x="228" y="346" width="1" height="1"/>
<rect x="226" y="349" width="1" height="1"/>
<rect x="213" y="345" width="1" height="1"/>
<rect x="213" y="347" width="1" height="1"/>
<rect x="213" y="348" width="1" height="1"/>
<rect x="213" y="349" width="1" height="1"/>
<rect x="214" y="350" width="1" height="1"/>
<rect x="214" y="351" width="1" height="1"/>
<rect x="231" y="338" width="1" height="1"/>
<rect x="241" y="337" width="1" height="1"/>
<rect x="241" y="338" width="1" height="1"/>
<rect x="240" y="340" width="1" height="1"/>
<rect x="239" y="341" width="1" height="1"/>
<rect x="241" y="341" width="1" height="1"/>
<rect x="239" y="346" width="1" height="1"/>
<rect x="239" y="347" width="1" height="1"/>
<rect x="240" y="348" width="1" height="1"/>
<rect x="242" y="348" width="1" height="1"/>
<rect x="252" y="342" width="1" height="1"/>
<rect x="252" y="343" width="1" height="1"/>
<rect x="252" y="345" width="1" height="1"/>
<rect x="246" y="348" width="1" height="1"/>
<rect x="249" y="349" width="1" height="1"/>
<rect x="266" y="340" width="1" height="1"/>
<rect x="270" y="346" width="1" height="1"/>
<rect x="283" y="338" width="1" height="1"/>
<rect x="283" y="339" width="1" height="1"/>
<rect x="281" y="341" width="1" height="1"/>
<rect x="279" y="341" width="1" height="1"/>
<rect x="278" y="345" width="1" height="1"/>
<rect x="279" y="346" width="1" height="1"/>
<rect x="284" y="349" width="1" height="1"/>
<rect x="217" y="352" width="1" height="1"/>
<rect x="226" y="357" width="1" height="1"/>
<rect x="223" y="360" width="1" height="1"/>
<rect x="223" y="361" width="1" height="1"/>
<rect x="227" y="361" width="1" height="1"/>
<rect x="226" y="362" width="1" height="1"/>
<rect x="216" y="361" width="1" height="1"/>
<rect x="216" y="363" width="1" height="1"/>
<rect x="216" y="364" width="1" height="1"/>
<rect x="220" y="363" width="1" height="1"/>
<rect x="223" y="363" width="1" height="1"/>
<rect x="223" y="365" width="1" height="1"/>
<rect x="223" y="366" width="1" height="1"/>
<rect x="249" y="352" width="1" height="1"/>
<rect x="249" y="354" width="1" height="1"/>
<rect x="249" y="356" width="1" height="1"/>
<rect x="244" y="357" width="1" height="1"/>
<rect x="245" y="359" width="1" height="1"/>
<rect x="247" y="357" width="1" height="1"/>
<rect x="247" y="359" width="1" height="1"/>
<rect x="247" y="360" width="1" height="1"/>
<rect x="247" y="362" width="1" height="1"/>
<rect x="247" y="363" width="1" height="1"/>
<rect x="255" y="357" width="1" height="1"/>
<rect x="255" y="361" width="1" height="1"/>
<rect x="256" y="365" width="1" height="1"/>
<rect x="260" y="365" width="1" height="1"/>
<rect x="270" y="354" width="1" height="1"/>
<rect x="270" y="356" width="1" height="1"/>
<rect x="279" y="353" width="1" height="1"/>
<rect x="279" y="357" width="1" height="1"/>
<rect x="279" y="359" width="1" height="1"/>
<rect x="275" y="357" width="1" height="1"/>
<rect x="278" y="364" width="1" height="1"/>
<rect x="278" y="365" width="1" height="1"/>
<rect x="284" y="363" width="1" height="1"/>
<rect x="205" y="374" width="1" height="1"/>
<rect x="205" y="375" width="1" height="1"/>
<rect x="211" y="371" width="1" height="1"/>
<rect x="211" y="372" width="1" height="1"/>
<rect x="211" y="372" width="1" height="1"/>
<rect x="211" y="374" width="1" height="1"/>
<rect x="222" y="368" width="1" height="1"/>
<rect x="223" y="367" width="1" height="1"/>
<rect x="223" y="373" width="1" height="1"/>
<rect x="229" y="379" width="1" height="1"/>
<rect x="232" y="366" width="1" height="1"/>
<rect x="232" y="368" width="1" height="1"/>
<rect x="232" y="369" width="1" height="1"/>
<rect x="233" y="369" width="1" height="1"/>
<rect x="238" y="370" width="1" height="1"/>
<rect x="240" y="370" width="1" height="1"/>
<rect x="234" y="373" width="1" height="1"/>
<rect x="234" y="374" width="1" height="1"/>
<rect x="235" y="374" width="1" height="1"/>
<rect x="238" y="373" width="1" height="1"/>
<rect x="238" y="374" width="1" height="1"/>
<rect x="240" y="376" width="1" height="1"/>
<rect x="240" y="377" width="1" height="1"/>
<rect x="235" y="378" width="1" height="1"/>
<rect x="235" y="379" width="1" height="1"/>
<rect x="230" y="376" width="1" height="1"/>
<rect x="256" y="368" width="1" height="1"/>
<rect x="250" y="377" width="1" height="1"/>
<rect x="250" y="380" width="1" height="1"/>
<rect x="254" y="381" width="1" height="1"/>
<rect x="258" y="376" width="1" height="1"/>
<rect x="260" y="372" width="1" height="1"/>
<rect x="263" y="371" width="1" height="1"/>
<rect x="263" y="372" width="1" height="1"/>
<rect x="263" y="377" width="1" height="1"/>
<rect x="267" y="376" width="1" height="1"/>
<rect x="267" y="377" width="1" height="1"/>
<rect x="267" y="380" width="1" height="1"/>
<rect x="269" y="366" width="1" height="1"/>
<rect x="269" y="369" width="1" height="1"/>
<rect x="269" y="370" width="1" height="1"/>
<rect x="269" y="371" width="1" height="1"/>
<rect x="270" y="378" width="1" height="1"/>
<rect x="270" y="379" width="1" height="1"/>
<rect x="270" y="381" width="1" height="1"/>
<rect x="270" y="382" width="1" height="1"/>
<rect x="270" y="382" width="1" height="1"/>
<rect x="276" y="377" width="1" height="1"/>
<rect x="285" y="372" width="1" height="1"/>
<rect x="285" y="378" width="1" height="1"/>
<rect x="285" y="379" width="1" height="1"/>
<rect x="218" y="381" width="1" height="1"/>
<rect x="218" y="382" width="1" height="1"/>
<rect x="218" y="383" width="1" height="1"/>
<rect x="218" y="384" width="1" height="1"/>
<rect x="218" y="385" width="1" height="1"/>
<rect x="218" y="387" width="1" height="1"/>
<rect x="220" y="382" width="1" height="1"/>
<rect x="223" y="382" width="1" height="1"/>
<rect x="225" y="382" width="1" height="1"/>
<rect x="227" y="382" width="1" height="1"/>
<rect x="229" y="382" width="1" height="1"/>
<rect x="229" y="384" width="1" height="1"/>
<rect x="223" y="387" width="1" height="1"/>
<rect x="223" y="388" width="1" height="1"/>
<rect x="227" y="389" width="1" height="1"/>
<rect x="228" y="391" width="1" height="1"/>
<rect x="221" y="392" width="1" height="1"/>
<rect x="221" y="393" width="1" height="1"/>
<rect x="213" y="385" width="1" height="1"/>
<rect x="213" y="386" width="1" height="1"/>
<rect x="213" y="388" width="1" height="1"/>
<rect x="213" y="389" width="1" height="1"/>
<rect x="213" y="391" width="1" height="1"/>
<rect x="213" y="395" width="1" height="1"/>
<rect x="213" y="396" width="1" height="1"/>
<rect x="209" y="393" width="1" height="1"/>
<rect x="230" y="383" width="1" height="1"/>
<rect x="230" y="384" width="1" height="1"/>
<rect x="230" y="387" width="1" height="1"/>
<rect x="230" y="388" width="1" height="1"/>
<rect x="235" y="382" width="1" height="1"/>
<rect x="235" y="383" width="1" height="1"/>
<rect x="233" y="394" width="1" height="1"/>
<rect x="245" y="384" width="1" height="1"/>
<rect x="248" y="384" width="1" height="1"/>
<rect x="248" y="385" width="1" height="1"/>
<rect x="243" y="388" width="1" height="1"/>
<rect x="243" y="391" width="1" height="1"/>
<rect x="254" y="386" width="1" height="1"/>
<rect x="277" y="390" width="1" height="1"/>
<rect x="277" y="391" width="1" height="1"/>
<rect x="281" y="382" width="1" height="1"/>
<rect x="275" y="395" width="1" height="1"/>
<rect x="257" y="395" width="1" height="1"/>
<rect x="213" y="401" width="1" height="1"/>
<rect x="211" y="403" width="1" height="1"/>
<rect x="213" y="404" width="1" height="1"/>
<rect x="215" y="404" width="1" height="1"/>
<rect x="215" y="406" width="1" height="1"/>
<rect x="215" y="409" width="1" height="1"/>
<rect x="215" y="411" width="1" height="1"/>
<rect x="208" y="410" width="1" height="1"/>
<rect x="220" y="402" width="1" height="1"/>
<rect x="223" y="400" width="1" height="1"/>
<rect x="225" y="399" width="1" height="1"/>
<rect x="228" y="398" width="1" height="1"/>
<rect x="223" y="403" width="1" height="1"/>
<rect x="220" y="407" width="1" height="1"/>
<rect x="220" y="412" width="1" height="1"/>
<rect x="224" y="412" width="1" height="1"/>
<rect x="220" y="413" width="1" height="1"/>
<rect x="218" y="417" width="1" height="1"/>
<rect x="220" y="417" width="1" height="1"/>
<rect x="220" y="418" width="1" height="1"/>
<rect x="224" y="416" width="1" height="1"/>
<rect x="222" y="425" width="1" height="1"/>
<rect x="227" y="424" width="1" height="1"/>
<rect x="233" y="399" width="1" height="1"/>
<rect x="232" y="400" width="1" height="1"/>
<rect x="233" y="402" width="1" height="1"/>
<rect x="237" y="404" width="1" height="1"/>
<rect x="236" y="406" width="1" height="1"/>
<rect x="237" y="409" width="1" height="1"/>
<rect x="235" y="411" width="1" height="1"/>
<rect x="235" y="412" width="1" height="1"/>
<rect x="233" y="411" width="1" height="1"/>
<rect x="236" y="415" width="1" height="1"/>
<rect x="236" y="416" width="1" height="1"/>
<rect x="238" y="419" width="1" height="1"/>
<rect x="236" y="422" width="1" height="1"/>
<rect x="238" y="423" width="1" height="1"/>
<rect x="234" y="423" width="1" height="1"/>
<rect x="234" y="424" width="1" height="1"/>
<rect x="234" y="425" width="1" height="1"/>
<rect x="253" y="407" width="1" height="1"/>
<rect x="253" y="408" width="1" height="1"/>
<rect x="253" y="411" width="1" height="1"/>
<rect x="253" y="412" width="1" height="1"/>
<rect x="254" y="421" width="1" height="1"/>
<rect x="254" y="422" width="1" height="1"/>
<rect x="268" y="418" width="1" height="1"/>
<rect x="269" y="425" width="1" height="1"/>
<rect x="271" y="413" width="1" height="1"/>
<rect x="271" y="417" width="1" height="1"/>
<rect x="272" y="426" width="1" height="1"/>
<rect x="275" y="414" width="1" height="1"/>
<rect x="273" y="407" width="1" height="1"/>
<rect x="277" y="408" width="1" height="1"/>
<rect x="277" y="405" width="1" height="1"/>
<rect x="277" y="400" width="1" height="1"/>
<rect x="281" y="403" width="1" height="1"/>
<rect x="281" y="409" width="1" height="1"/>
<rect x="281" y="416" width="1" height="1"/>
<rect x="281" y="421" width="1" height="1"/>
<rect x="281" y="422" width="1" height="1"/>
<rect x="281" y="425" width="1" height="1"/>
<rect x="281" y="426" width="1" height="1"/>
<rect x="277" y="397" width="1" height="1"/>
<rect x="275" y="395" width="1" height="1"/>
<rect x="60" y="334" width="1" height="1"/>
<rect x="67" y="335" width="1" height="1"/>
<rect x="56" y="337" width="1" height="1"/>
<rect x="58" y="337" width="1" height="1"/>
<rect x="53" y="340" width="1" height="1"/>
<rect x="67" y="339" width="1" height="1"/>
<rect x="58" y="346" width="1" height="1"/>
<rect x="60" y="346" width="1" height="1"/>
<rect x="63" y="345" width="1" height="1"/>
<rect x="63" y="348" width="1" height="1"/>
<rect x="60" y="353" width="1" height="1"/>
<rect x="60" y="354" width="1" height="1"/>
<rect x="66" y="357" width="1" height="1"/>
<rect x="66" y="361" width="1" height="1"/>
<rect x="98" y="352" width="1" height="1"/>
<rect x="111" y="332" width="1" height="1"/>
<rect x="114" y="334" width="1" height="1"/>
<rect x="107" y="336" width="1" height="1"/>
<rect x="114" y="339" width="1" height="1"/>
<rect x="111" y="344" width="1" height="1"/>
<rect x="107" y="345" width="1" height="1"/>
<rect x="106" y="347" width="1" height="1"/>
<rect x="112" y="352" width="1" height="1"/>
<rect x="112" y="353" width="1" height="1"/>
<rect x="114" y="352" width="1" height="1"/>
<rect x="108" y="353" width="1" height="1"/>
<rect x="116" y="354" width="1" height="1"/>
<rect x="105" y="355" width="1" height="1"/>
<rect x="110" y="359" width="1" height="1"/>
<rect x="111" y="361" width="1" height="1"/>
<rect x="106" y="361" width="1" height="1"/>
<rect x="106" y="362" width="1" height="1"/>
<rect x="113" y="361" width="1" height="1"/>
<rect x="115" y="361" width="1" height="1"/>
<rect x="115" y="362" width="1" height="1"/>
<rect x="57" y="368" width="1" height="1"/>
<rect x="62" y="369" width="1" height="1"/>
<rect x="57" y="377" width="1" height="1"/>
<rect x="65" y="377" width="1" height="1"/>
<rect x="64" y="379" width="1" height="1"/>
<rect x="62" y="380" width="1" height="1"/>
<rect x="59" y="382" width="1" height="1"/>
<rect x="60" y="382" width="1" height="1"/>
<rect x="62" y="384" width="1" height="1"/>
<rect x="64" y="385" width="1" height="1"/>
<rect x="60" y="385" width="1" height="1"/>
<rect x="60" y="386" width="1" height="1"/>
<rect x="60" y="387" width="1" height="1"/>
<rect x="75" y="383" width="1" height="1"/>
<rect x="84" y="378" width="1" height="1"/>
<rect x="84" y="380" width="1" height="1"/>
<rect x="49" y="385" width="1" height="1"/>
<rect x="58" y="393" width="1" height="1"/>
<rect x="54" y="400" width="1" height="1"/>
<rect x="54" y="402" width="1" height="1"/>
<rect x="54" y="403" width="1" height="1"/>
<rect x="58" y="400" width="1" height="1"/>
<rect x="62" y="402" width="1" height="1"/>
<rect x="62" y="403" width="1" height="1"/>
<rect x="63" y="399" width="1" height="1"/>
<rect x="65" y="399" width="1" height="1"/>
<rect x="61" y="406" width="1" height="1"/>
<rect x="61" y="408" width="1" height="1"/>
<rect x="54" y="408" width="1" height="1"/>
<rect x="54" y="409" width="1" height="1"/>
<rect x="57" y="412" width="1" height="1"/>
<rect x="61" y="413" width="1" height="1"/>
<rect x="73" y="413" width="1" height="1"/>
<rect x="79" y="415" width="1" height="1"/>
<rect x="66" y="417" width="1" height="1"/>
<rect x="55" y="418" width="1" height="1"/>
<rect x="55" y="419" width="1" height="1"/>
<rect x="55" y="421" width="1" height="1"/>
<rect x="57" y="421" width="1" height="1"/>
<rect x="62" y="419" width="1" height="1"/>
<rect x="64" y="424" width="1" height="1"/>
<rect x="64" y="425" width="1" height="1"/>
<rect x="88" y="410" width="1" height="1"/>
<rect x="88" y="414" width="1" height="1"/>
<rect x="105" y="376" width="1" height="1"/>
<rect x="105" y="377" width="1" height="1"/>
<rect x="105" y="381" width="1" height="1"/>
<rect x="112" y="377" width="1" height="1"/>
<rect x="115" y="376" width="1" height="1"/>
<rect x="115" y="377" width="1" height="1"/>
<rect x="113" y="383" width="1" height="1"/>
<rect x="114" y="383" width="1" height="1"/>
<rect x="116" y="389" width="1" height="1"/>
<rect x="111" y="391" width="1" height="1"/>
<rect x="111" y="392" width="1" height="1"/>
<rect x="105" y="392" width="1" height="1"/>
<rect x="116" y="396" width="1" height="1"/>
<rect x="105" y="419" width="1" height="1"/>
<rect x="108" y="418" width="1" height="1"/>
<rect x="108" y="421" width="1" height="1"/>
<rect x="111" y="419" width="1" height="1"/>
<rect x="112" y="424" width="1" height="1"/>
<rect x="109" y="425" width="1" height="1"/>
<rect x="111" y="426" width="1" height="1"/>
<rect x="108" y="353" width="1" height="1"/>
<rect x="112" y="352" width="1" height="1"/>
<rect x="114" y="353" width="1" height="1"/>
<rect x="110" y="359" width="1" height="1"/>
<rect x="115" y="361" width="1" height="1"/>
<rect x="115" y="365" width="1" height="1"/>
<rect x="112" y="366" width="1" height="1"/>
<rect x="115" y="376" width="1" height="1"/>
<rect x="115" y="377" width="1" height="1"/>
<rect x="112" y="377" width="1" height="1"/>
<rect x="113" y="383" width="1" height="1"/>
<rect x="114" y="383" width="1" height="1"/>
<rect x="116" y="389" width="1" height="1"/>
<rect x="111" y="391" width="1" height="1"/>
<rect x="111" y="392" width="1" height="1"/>
<rect x="116" y="396" width="1" height="1"/>
<rect x="107" y="406" width="1" height="1"/>
<rect x="112" y="404" width="1" height="1"/>
<rect x="108" y="419" width="1" height="1"/>
<rect x="111" y="419" width="1" height="1"/>
<rect x="185" y="389" width="1" height="1"/>
<rect x="122" y="364" width="1" height="1"/>
<rect x="124" y="365" width="1" height="1"/>
<rect x="126" y="364" width="1" height="1"/>
<rect x="126" y="365" width="1" height="1"/>
<rect x="129" y="365" width="1" height="1"/>
<rect x="133" y="365" width="1" height="1"/>
<rect x="136" y="365" width="1" height="1"/>
<rect x="141" y="364" width="1" height="1"/>
<rect x="142" y="364" width="1" height="1"/>
<rect x="143" y="364" width="1" height="1"/>
<rect x="136" y="357" width="1" height="1"/>
<rect x="139" y="357" width="1" height="1"/>
<rect x="141" y="357" width="1" height="1"/>
<rect x="144" y="357" width="1" height="1"/>
<rect x="121" y="359" width="1" height="1"/>
<rect x="123" y="359" width="1" height="1"/>
<rect x="124" y="345" width="1" height="1"/>
<rect x="188" y="346" width="1" height="1"/>
<rect x="188" y="347" width="1" height="1"/>
<rect x="205" y="374" width="1" height="1"/>
<rect x="205" y="375" width="1" height="1"/>
<rect x="185" y="389" width="1" height="1"/>
<rect x="205" y="374" width="1" height="1"/>
<rect x="205" y="375" width="1" height="1"/>
<rect x="211" y="371" width="1" height="1"/>
<rect x="211" y="372" width="1" height="1"/>
<rect x="211" y="374" width="1" height="1"/>
<rect x="209" y="393" width="1" height="1"/>
<rect x="208" y="410" width="1" height="1"/>
<rect x="186" y="423" width="1" height="1"/>
<rect x="56" y="347" width="1" height="1"/>
<rect x="63" y="340" width="1" height="1"/>
<rect x="61" y="367" width="1" height="1"/>
<rect x="51" y="380" width="1" height="1"/>
<rect x="51" y="373" width="1" height="1"/>
<rect x="51" y="341" width="1" height="1"/>
<rect x="58" y="410" width="1" height="1"/>
<rect x="52" y="354" width="1" height="1"/>
<rect x="63" y="421" width="1" height="1"/>
<rect x="62" y="370" width="1" height="1"/>
<rect x="70" y="337" width="1" height="1"/>
<rect x="67" y="360" width="1" height="1"/>
<rect x="53" y="344" width="1" height="1"/>
<rect x="56" y="409" width="1" height="1"/>
<rect x="54" y="387" width="1" height="1"/>
<rect x="63" y="368" width="1" height="1"/>
<rect x="61" y="339" width="1" height="1"/>
<rect x="51" y="352" width="1" height="1"/>
<rect x="64" y="373" width="1" height="1"/>
<rect x="56" y="387" width="1" height="1"/>
<rect x="59" y="361" width="1" height="1"/>
<rect x="66" y="398" width="1" height="1"/>
<rect x="55" y="386" width="1" height="1"/>
<rect x="61" y="414" width="1" height="1"/>
<rect x="65" y="360" width="1" height="1"/>
<rect x="70" y="344" width="1" height="1"/>
<rect x="58" y="403" width="1" height="1"/>
<rect x="53" y="378" width="1" height="1"/>
<rect x="51" y="395" width="1" height="1"/>
<rect x="65" y="386" width="1" height="1"/>
<rect x="122" y="362" width="1" height="1"/>
<rect x="117" y="388" width="1" height="1"/>
<rect x="114" y="375" width="1" height="1"/>
<rect x="121" y="421" width="1" height="1"/>
<rect x="112" y="395" width="1" height="1"/>
<rect x="102" y="398" width="1" height="1"/>
<rect x="116" y="425" width="1" height="1"/>
<rect x="121" y="359" width="1" height="1"/>
<rect x="110" y="395" width="1" height="1"/>
<rect x="101" y="376" width="1" height="1"/>
<rect x="104" y="344" width="1" height="1"/>
<rect x="101" y="404" width="1" height="1"/>
<rect x="103" y="356" width="1" height="1"/>
<rect x="110" y="414" width="1" height="1"/>
<rect x="102" y="375" width="1" height="1"/>
<rect x="114" y="415" width="1" height="1"/>
<rect x="120" y="413" width="1" height="1"/>
<rect x="107" y="372" width="1" height="1"/>
<rect x="109" y="415" width="1" height="1"/>
<rect x="124" y="347" width="1" height="1"/>
<rect x="104" y="355" width="1" height="1"/>
<rect x="106" y="378" width="1" height="1"/>
<rect x="115" y="357" width="1" height="1"/>
<rect x="100" y="372" width="1" height="1"/>
<rect x="109" y="386" width="1" height="1"/>
<rect x="281" y="397" width="1" height="1"/>
<rect x="249" y="390" width="1" height="1"/>
<rect x="261" y="338" width="1" height="1"/>
<rect x="277" y="406" width="1" height="1"/>
<rect x="276" y="407" width="1" height="1"/>
<rect x="239" y="370" width="1" height="1"/>
<rect x="218" y="392" width="1" height="1"/>
<rect x="215" y="339" width="1" height="1"/>
<rect x="226" y="348" width="1" height="1"/>
<rect x="236" y="338" width="1" height="1"/>
<rect x="210" y="347" width="1" height="1"/>
<rect x="218" y="367" width="1" height="1"/>
<rect x="212" y="414" width="1" height="1"/>
<rect x="256" y="347" width="1" height="1"/>
<rect x="229" y="365" width="1" height="1"/>
<rect x="237" y="344" width="1" height="1"/>
<rect x="274" y="425" width="1" height="1"/>
<rect x="245" y="378" width="1" height="1"/>
<rect x="216" y="343" width="1" height="1"/>
<rect x="236" y="358" width="1" height="1"/>
<rect x="272" y="348" width="1" height="1"/>
<rect x="212" y="421" width="1" height="1"/>
<rect x="250" y="347" width="1" height="1"/>
<rect x="251" y="336" width="1" height="1"/>
<rect x="250" y="424" width="1" height="1"/>
<rect x="275" y="398" width="1" height="1"/>
<rect x="230" y="367" width="1" height="1"/>
<rect x="223" y="405" width="1" height="1"/>
<rect x="250" y="405" width="1" height="1"/>
<rect x="235" y="354" width="1" height="1"/>
<rect x="271" y="425" width="1" height="1"/>
<rect x="274" y="408" width="1" height="1"/>
<rect x="271" y="402" width="1" height="1"/>
<rect x="227" y="381" width="1" height="1"/>
<rect x="237" y="336" width="1" height="1"/>
<rect x="212" y="359" width="1" height="1"/>
<rect x="229" y="397" width="1" height="1"/>
<rect x="282" y="375" width="1" height="1"/>
<rect x="280" y="425" width="1" height="1"/>
<rect x="282" y="367" width="1" height="1"/>
<rect x="227" y="354" width="1" height="1"/>
<rect x="225" y="352" width="1" height="1"/>
<rect x="257" y="417" width="1" height="1"/>
<rect x="273" y="378" width="1" height="1"/>
<rect x="259" y="407" width="1" height="1"/>
<rect x="216" y="394" width="1" height="1"/>
<rect x="278" y="406" width="1" height="1"/>
<rect x="266" y="377" width="1" height="1"/>
<rect x="223" y="406" width="1" height="1"/>
<rect x="235" y="407" width="1" height="1"/>
<rect x="283" y="370" width="1" height="1"/>
<rect x="240" y="421" width="1" height="1"/>
<rect x="264" y="349" width="1" height="1"/>
<rect x="220" y="347" width="1" height="1"/>
<rect x="278" y="408" width="1" height="1"/>
<rect x="221" y="410" width="1" height="1"/>
<rect x="284" y="394" width="1" height="1"/>
<rect x="236" y="384" width="1" height="1"/>
<rect x="220" y="334" width="1" height="1"/>
<rect x="283" y="393" width="1" height="1"/>
<rect x="249" y="420" width="1" height="1"/>
<rect x="243" y="414" width="1" height="1"/>
<rect x="272" y="353" width="1" height="1"/>
<rect x="229" y="360" width="1" height="1"/>
<rect x="228" y="388" width="1" height="1"/>
<rect x="229" y="372" width="1" height="1"/>
<rect x="220" y="418" width="1" height="1"/>
<rect x="237" y="376" width="1" height="1"/>
<rect x="254" y="417" width="1" height="1"/>
<rect x="242" y="418" width="1" height="1"/>
<rect x="248" y="382" width="1" height="1"/>
<rect x="249" y="335" width="1" height="1"/>
<rect x="243" y="350" width="1" height="1"/>
<rect x="210" y="407" width="1" height="1"/>
<rect x="223" y="377" width="1" height="1"/>
<rect x="264" y="385" width="1" height="1"/>
<rect x="234" y="381" width="1" height="1"/>
<rect x="252" y="406" width="1" height="1"/>
<rect x="218" y="385" width="1" height="1"/>
<rect x="229" y="359" width="1" height="1"/>
<rect x="268" y="380" width="1" height="1"/>
<rect x="252" y="404" width="1" height="1"/>
<rect x="278" y="374" width="1" height="1"/>
<rect x="256" y="380" width="1" height="1"/>
<rect x="248" y="397" width="1" height="1"/>
<rect x="244" y="383" width="1" height="1"/>
<rect x="246" y="421" width="1" height="1"/>
<rect x="262" y="415" width="1" height="1"/>
<rect x="281" y="357" width="1" height="1"/>
<rect x="252" y="421" width="1" height="1"/>
<rect x="273" y="346" width="1" height="1"/>
<rect x="219" y="374" width="1" height="1"/>
<rect x="215" y="355" width="1" height="1"/>
<rect x="215" y="395" width="1" height="1"/>
<rect x="269" y="416" width="1" height="1"/>
<rect x="222" y="400" width="1" height="1"/>
<rect x="260" y="346" width="1" height="1"/>
<rect x="276" y="423" width="1" height="1"/>
<rect x="226" y="422" width="1" height="1"/>
<rect x="240" y="378" width="1" height="1"/>
<rect x="284" y="410" width="1" height="1"/>
<rect x="222" y="373" width="1" height="1"/>
<rect x="249" y="365" width="1" height="1"/>
<rect x="225" y="363" width="1" height="1"/>
<rect x="264" y="335" width="1" height="1"/>
<rect x="252" y="374" width="1" height="1"/>
<rect x="211" y="364" width="1" height="1"/>
<rect x="257" y="381" width="1" height="1"/>
<rect x="215" y="425" width="1" height="1"/>
<rect x="269" y="423" width="1" height="1"/>
<rect x="218" y="358" width="1" height="1"/>
<rect x="213" y="405" width="1" height="1"/>
<rect x="230" y="345" width="1" height="1"/>
<rect x="242" y="418" width="1" height="1"/>
<rect x="271" y="357" width="1" height="1"/>
<rect x="221" y="418" width="1" height="1"/>
<rect x="253" y="398" width="1" height="1"/>
<rect x="217" y="338" width="1" height="1"/>
<rect x="262" y="373" width="1" height="1"/>
<rect x="215" y="420" width="1" height="1"/>
<rect x="258" y="408" width="1" height="1"/>
<rect x="216" y="413" width="1" height="1"/>
<rect x="215" y="413" width="1" height="1"/>
<rect x="244" y="365" width="1" height="1"/>
<rect x="251" y="419" width="1" height="1"/>
<rect x="230" y="345" width="1" height="1"/>
<rect x="250" y="355" width="1" height="1"/>
<rect x="218" y="348" width="1" height="1"/>
<rect x="214" y="352" width="1" height="1"/>
<rect x="233" y="361" width="1" height="1"/>
<rect x="267" y="360" width="1" height="1"/>
<rect x="248" y="350" width="1" height="1"/>
<rect x="236" y="335" width="1" height="1"/>
<rect x="229" y="334" width="1" height="1"/>
<rect x="265" y="384" width="1" height="1"/>
<rect x="224" y="377" width="1" height="1"/>
<rect x="280" y="343" width="1" height="1"/>
<rect x="271" y="373" width="1" height="1"/>
<rect x="247" y="411" width="1" height="1"/>
<rect x="239" y="380" width="1" height="1"/>
<rect x="262" y="424" width="1" height="1"/>
<rect x="236" y="410" width="1" height="1"/>
<rect x="263" y="392" width="1" height="1"/>
<rect x="240" y="365" width="1" height="1"/>
<rect x="214" y="345" width="1" height="1"/>
<rect x="215" y="402" width="1" height="1"/>
<rect x="229" y="348" width="1" height="1"/>
<rect x="216" y="411" width="1" height="1"/>
<rect x="275" y="395" width="1" height="1"/>
<rect x="231" y="356" width="1" height="1"/>
<rect x="232" y="376" width="1" height="1"/>
<rect x="222" y="374" width="1" height="1"/>
<rect x="230" y="422" width="1" height="1"/>
<rect x="283" y="384" width="1" height="1"/>
<rect x="228" y="423" width="1" height="1"/>
<rect x="233" y="366" width="1" height="1"/>
<rect x="210" y="368" width="1" height="1"/>
<rect x="246" y="380" width="1" height="1"/>
<rect x="225" y="380" width="1" height="1"/>
<rect x="210" y="358" width="1" height="1"/>
<rect x="217" y="370" width="1" height="1"/>
<rect x="213" y="335" width="1" height="1"/>
<rect x="233" y="355" width="1" height="1"/>
<rect x="254" y="382" width="1" height="1"/>
<rect x="266" y="394" width="1" height="1"/>
<rect x="264" y="415" width="1" height="1"/>
<rect x="239" y="363" width="1" height="1"/>
<rect x="284" y="347" width="1" height="1"/>
<rect x="264" y="393" width="1" height="1"/>
<rect x="213" y="411" width="1" height="1"/>
<rect x="277" y="391" width="1" height="1"/>
<rect x="265" y="409" width="1" height="1"/>
<rect x="220" y="382" width="1" height="1"/>
<rect x="248" y="411" width="1" height="1"/>
<rect x="270" y="410" width="1" height="1"/>
<rect x="254" y="416" width="1" height="1"/>
<rect x="261" y="397" width="1" height="1"/>
<rect x="227" y="336" width="1" height="1"/>
<rect x="220" y="367" width="1" height="1"/>
<rect x="218" y="411" width="1" height="1"/>
<rect x="87" y="391" width="1" height="1"/>
<rect x="89" y="396" width="1" height="1"/>
<rect x="85" y="333" width="1" height="1"/>
<rect x="94" y="403" width="1" height="1"/>
<rect x="85" y="383" width="1" height="1"/>
<rect x="90" y="339" width="1" height="1"/>
<rect x="188" y="356" width="1" height="1"/>
<rect x="131" y="358" width="1" height="1"/>
<rect x="187" y="352" width="1" height="1"/>
<rect x="188" y="424" width="1" height="1"/>
<rect x="167" y="369" width="1" height="1"/>
<rect x="166" y="397" width="1" height="1"/>
<rect x="190" y="390" width="1" height="1"/>
<rect x="180" y="340" width="1" height="1"/>
</g>
<g shape-rendering="crispEdges">
<polyline points="115.897,364.577 123.75,364.283 132.475,363.551 141.2,361.931 149.925,359.718 158.65,357.111 167.375,354.899 172.61,353.453 180.462,351.31 186.57,350.323" fill="none" stroke="#fff" stroke-width="1.7" stroke-linejoin="round" stroke-linecap="butt" stroke-dasharray="2.2 1"/>
<polyline points="65.467,426.697 67.561,426.303 71.4,425.829 74.89,425.316 76.984,424.842 80.125,423.935 81.87,423.145" fill="none" stroke="#fff" stroke-width="2" stroke-linejoin="round" stroke-linecap="butt" stroke-dasharray="2.2 1"/>
<polyline points="85.8835,411.107 86.407,411.896 87.803,412.212 89.199,412.015 90.595,411.502 91.642,410.712 92.7763,409.765 94.9575,408.048 97.1387,406.074 99.32,404.357 101.501,402.858 102.81,402.305 106.3,402.226 110.662,401.792 116.77,402.423 123.75,402.818 132.475,403.015 141.2,402.621 149.925,401.831 158.65,401.141 167.375,400.154 174.355,399.068" fill="none" stroke="#fff" stroke-width="1.8" stroke-linejoin="round" stroke-linecap="butt" stroke-dasharray="2.2 1"/>
<polyline points="174.355,398.674 179.59,397.194 184.825,395.714 188.315,394.233 192.677,391.767 195.295,389.3 197.476,386.339 199.221,382.886 200.094,379.925 200.355,377.952" fill="none" stroke="#fff" stroke-width="1.3" stroke-linejoin="round" stroke-linecap="butt" stroke-dasharray="2 1"/>
<polyline points="174.355,399.463 186.57,397.194 195.295,394.727 200.53,392.26 204.892,389.3 207.51,385.846 209.081,382.886 209.255,382.294" fill="none" stroke="#fff" stroke-width="1.3" stroke-linejoin="round" stroke-linecap="butt" stroke-dasharray="2 1"/>
<polyline points="122.354,399.661 127.938,399.858 134.22,400.45 142.945,401.239" fill="none" stroke="#fff" stroke-width="1" stroke-linejoin="round" stroke-linecap="butt" stroke-dasharray="1 2"/>
</g>
<g shape-rendering="crispEdges">
<rect x="337.5" y="330.5" width="252" height="98" fill="none" stroke="#808080" stroke-width="1"/>
</g>
<g shape-rendering="crispEdges" fill="#505050">
<rect x="541" y="332" width="1" height="1"/>
<rect x="541" y="333" width="1" height="1"/>
<rect x="543" y="333" width="1" height="1"/>
<rect x="537" y="334" width="1" height="1"/>
<rect x="545" y="333" width="1" height="1"/>
<rect x="558" y="333" width="1" height="1"/>
<rect x="550" y="335" width="1" height="1"/>
<rect x="550" y="336" width="1" height="1"/>
<rect x="583" y="334" width="1" height="1"/>
<rect x="585" y="334" width="1" height="1"/>
<rect x="518" y="340" width="1" height="1"/>
<rect x="520" y="341" width="1" height="1"/>
<rect x="521" y="340" width="1" height="1"/>
<rect x="527" y="338" width="1" height="1"/>
<rect x="530" y="342" width="1" height="1"/>
<rect x="523" y="345" width="1" height="1"/>
<rect x="530" y="346" width="1" height="1"/>
<rect x="528" y="349" width="1" height="1"/>
<rect x="515" y="345" width="1" height="1"/>
<rect x="515" y="347" width="1" height="1"/>
<rect x="515" y="348" width="1" height="1"/>
<rect x="515" y="349" width="1" height="1"/>
<rect x="516" y="350" width="1" height="1"/>
<rect x="516" y="351" width="1" height="1"/>
<rect x="533" y="338" width="1" height="1"/>
<rect x="543" y="337" width="1" height="1"/>
<rect x="543" y="338" width="1" height="1"/>
<rect x="542" y="340" width="1" height="1"/>
<rect x="541" y="341" width="1" height="1"/>
<rect x="543" y="341" width="1" height="1"/>
<rect x="541" y="346" width="1" height="1"/>
<rect x="541" y="347" width="1" height="1"/>
<rect x="542" y="348" width="1" height="1"/>
<rect x="544" y="348" width="1" height="1"/>
<rect x="554" y="342" width="1" height="1"/>
<rect x="554" y="343" width="1" height="1"/>
<rect x="554" y="345" width="1" height="1"/>
<rect x="548" y="348" width="1" height="1"/>
<rect x="551" y="349" width="1" height="1"/>
<rect x="568" y="340" width="1" height="1"/>
<rect x="572" y="346" width="1" height="1"/>
<rect x="585" y="338" width="1" height="1"/>
<rect x="585" y="339" width="1" height="1"/>
<rect x="583" y="341" width="1" height="1"/>
<rect x="581" y="341" width="1" height="1"/>
<rect x="580" y="345" width="1" height="1"/>
<rect x="581" y="346" width="1" height="1"/>
<rect x="586" y="349" width="1" height="1"/>
<rect x="519" y="352" width="1" height="1"/>
<rect x="528" y="357" width="1" height="1"/>
<rect x="525" y="360" width="1" height="1"/>
<rect x="525" y="361" width="1" height="1"/>
<rect x="529" y="361" width="1" height="1"/>
<rect x="528" y="362" width="1" height="1"/>
<rect x="518" y="361" width="1" height="1"/>
<rect x="518" y="363" width="1" height="1"/>
<rect x="518" y="364" width="1" height="1"/>
<rect x="522" y="363" width="1" height="1"/>
<rect x="525" y="363" width="1" height="1"/>
<rect x="525" y="365" width="1" height="1"/>
<rect x="525" y="366" width="1" height="1"/>
<rect x="551" y="352" width="1" height="1"/>
<rect x="551" y="354" width="1" height="1"/>
<rect x="551" y="356" width="1" height="1"/>
<rect x="546" y="357" width="1" height="1"/>
<rect x="547" y="359" width="1" height="1"/>
<rect x="549" y="357" width="1" height="1"/>
<rect x="549" y="359" width="1" height="1"/>
<rect x="549" y="360" width="1" height="1"/>
<rect x="549" y="362" width="1" height="1"/>
<rect x="549" y="363" width="1" height="1"/>
<rect x="557" y="357" width="1" height="1"/>
<rect x="557" y="361" width="1" height="1"/>
<rect x="558" y="365" width="1" height="1"/>
<rect x="562" y="365" width="1" height="1"/>
<rect x="572" y="354" width="1" height="1"/>
<rect x="572" y="356" width="1" height="1"/>
<rect x="581" y="353" width="1" height="1"/>
<rect x="581" y="357" width="1" height="1"/>
<rect x="581" y="359" width="1" height="1"/>
<rect x="577" y="357" width="1" height="1"/>
<rect x="580" y="364" width="1" height="1"/>
<rect x="580" y="365" width="1" height="1"/>
<rect x="586" y="363" width="1" height="1"/>
<rect x="507" y="374" width="1" height="1"/>
<rect x="507" y="375" width="1" height="1"/>
<rect x="513" y="371" width="1" height="1"/>
<rect x="513" y="372" width="1" height="1"/>
<rect x="513" y="372" width="1" height="1"/>
<rect x="513" y="374" width="1" height="1"/>
<rect x="524" y="368" width="1" height="1"/>
<rect x="525" y="367" width="1" height="1"/>
<rect x="525" y="373" width="1" height="1"/>
<rect x="531" y="379" width="1" height="1"/>
<rect x="534" y="366" width="1" height="1"/>
<rect x="534" y="368" width="1" height="1"/>
<rect x="534" y="369" width="1" height="1"/>
<rect x="535" y="369" width="1" height="1"/>
<rect x="540" y="370" width="1" height="1"/>
<rect x="542" y="370" width="1" height="1"/>
<rect x="536" y="373" width="1" height="1"/>
<rect x="536" y="374" width="1" height="1"/>
<rect x="537" y="374" width="1" height="1"/>
<rect x="540" y="373" width="1" height="1"/>
<rect x="540" y="374" width="1" height="1"/>
<rect x="542" y="376" width="1" height="1"/>
<rect x="542" y="377" width="1" height="1"/>
<rect x="537" y="378" width="1" height="1"/>
<rect x="537" y="379" width="1" height="1"/>
<rect x="532" y="376" width="1" height="1"/>
<rect x="558" y="368" width="1" height="1"/>
<rect x="552" y="377" width="1" height="1"/>
<rect x="552" y="380" width="1" height="1"/>
<rect x="556" y="381" width="1" height="1"/>
<rect x="560" y="376" width="1" height="1"/>
<rect x="562" y="372" width="1" height="1"/>
<rect x="565" y="371" width="1" height="1"/>
<rect x="565" y="372" width="1" height="1"/>
<rect x="565" y="377" width="1" height="1"/>
<rect x="569" y="376" width="1" height="1"/>
<rect x="569" y="377" width="1" height="1"/>
<rect x="569" y="380" width="1" height="1"/>
<rect x="571" y="366" width="1" height="1"/>
<rect x="571" y="369" width="1" height="1"/>
<rect x="571" y="370" width="1" height="1"/>
<rect x="571" y="371" width="1" height="1"/>
<rect x="572" y="378" width="1" height="1"/>
<rect x="572" y="379" width="1" height="1"/>
<rect x="572" y="381" width="1" height="1"/>
<rect x="572" y="382" width="1" height="1"/>
<rect x="572" y="382" width="1" height="1"/>
<rect x="578" y="377" width="1" height="1"/>
<rect x="587" y="372" width="1" height="1"/>
<rect x="587" y="378" width="1" height="1"/>
<rect x="587" y="379" width="1" height="1"/>
<rect x="520" y="381" width="1" height="1"/>
<rect x="520" y="382" width="1" height="1"/>
<rect x="520" y="383" width="1" height="1"/>
<rect x="520" y="384" width="1" height="1"/>
<rect x="520" y="385" width="1" height="1"/>
<rect x="520" y="387" width="1" height="1"/>
<rect x="522" y="382" width="1" height="1"/>
<rect x="525" y="382" width="1" height="1"/>
<rect x="527" y="382" width="1" height="1"/>
<rect x="529" y="382" width="1" height="1"/>
<rect x="531" y="382" width="1" height="1"/>
<rect x="531" y="384" width="1" height="1"/>
<rect x="525" y="387" width="1" height="1"/>
<rect x="525" y="388" width="1" height="1"/>
<rect x="529" y="389" width="1" height="1"/>
<rect x="530" y="391" width="1" height="1"/>
<rect x="523" y="392" width="1" height="1"/>
<rect x="523" y="393" width="1" height="1"/>
<rect x="515" y="385" width="1" height="1"/>
<rect x="515" y="386" width="1" height="1"/>
<rect x="515" y="388" width="1" height="1"/>
<rect x="515" y="389" width="1" height="1"/>
<rect x="515" y="391" width="1" height="1"/>
<rect x="515" y="395" width="1" height="1"/>
<rect x="515" y="396" width="1" height="1"/>
<rect x="511" y="393" width="1" height="1"/>
<rect x="532" y="383" width="1" height="1"/>
<rect x="532" y="384" width="1" height="1"/>
<rect x="532" y="387" width="1" height="1"/>
<rect x="532" y="388" width="1" height="1"/>
<rect x="537" y="382" width="1" height="1"/>
<rect x="537" y="383" width="1" height="1"/>
<rect x="535" y="394" width="1" height="1"/>
<rect x="547" y="384" width="1" height="1"/>
<rect x="550" y="384" width="1" height="1"/>
<rect x="550" y="385" width="1" height="1"/>
<rect x="545" y="388" width="1" height="1"/>
<rect x="545" y="391" width="1" height="1"/>
<rect x="556" y="386" width="1" height="1"/>
<rect x="579" y="390" width="1" height="1"/>
<rect x="579" y="391" width="1" height="1"/>
<rect x="583" y="382" width="1" height="1"/>
<rect x="577" y="395" width="1" height="1"/>
<rect x="559" y="395" width="1" height="1"/>
<rect x="515" y="401" width="1" height="1"/>
<rect x="513" y="403" width="1" height="1"/>
<rect x="515" y="404" width="1" height="1"/>
<rect x="517" y="404" width="1" height="1"/>
<rect x="517" y="406" width="1" height="1"/>
<rect x="517" y="409" width="1" height="1"/>
<rect x="517" y="411" width="1" height="1"/>
<rect x="510" y="410" width="1" height="1"/>
<rect x="522" y="402" width="1" height="1"/>
<rect x="525" y="400" width="1" height="1"/>
<rect x="527" y="399" width="1" height="1"/>
<rect x="530" y="398" width="1" height="1"/>
<rect x="525" y="403" width="1" height="1"/>
<rect x="522" y="407" width="1" height="1"/>
<rect x="522" y="412" width="1" height="1"/>
<rect x="526" y="412" width="1" height="1"/>
<rect x="522" y="413" width="1" height="1"/>
<rect x="520" y="417" width="1" height="1"/>
<rect x="522" y="417" width="1" height="1"/>
<rect x="522" y="418" width="1" height="1"/>
<rect x="526" y="416" width="1" height="1"/>
<rect x="524" y="425" width="1" height="1"/>
<rect x="529" y="424" width="1" height="1"/>
<rect x="535" y="399" width="1" height="1"/>
<rect x="534" y="400" width="1" height="1"/>
<rect x="535" y="402" width="1" height="1"/>
<rect x="539" y="404" width="1" height="1"/>
<rect x="538" y="406" width="1" height="1"/>
<rect x="539" y="409" width="1" height="1"/>
<rect x="537" y="411" width="1" height="1"/>
<rect x="537" y="412" width="1" height="1"/>
<rect x="535" y="411" width="1" height="1"/>
<rect x="538" y="415" width="1" height="1"/>
<rect x="538" y="416" width="1" height="1"/>
<rect x="540" y="419" width="1" height="1"/>
<rect x="538" y="422" width="1" height="1"/>
<rect x="540" y="423" width="1" height="1"/>
<rect x="536" y="423" width="1" height="1"/>
<rect x="536" y="424" width="1" height="1"/>
<rect x="536" y="425" width="1" height="1"/>
<rect x="555" y="407" width="1" height="1"/>
<rect x="555" y="408" width="1" height="1"/>
<rect x="555" y="411" width="1" height="1"/>
<rect x="555" y="412" width="1" height="1"/>
<rect x="556" y="421" width="1" height="1"/>
<rect x="556" y="422" width="1" height="1"/>
<rect x="570" y="418" width="1" height="1"/>
<rect x="571" y="425" width="1" height="1"/>
<rect x="573" y="413" width="1" height="1"/>
<rect x="573" y="417" width="1" height="1"/>
<rect x="574" y="426" width="1" height="1"/>
<rect x="577" y="414" width="1" height="1"/>
<rect x="575" y="407" width="1" height="1"/>
<rect x="579" y="408" width="1" height="1"/>
<rect x="579" y="405" width="1" height="1"/>
<rect x="579" y="400" width="1" height="1"/>
<rect x="583" y="403" width="1" height="1"/>
<rect x="583" y="409" width="1" height="1"/>
<rect x="583" y="416" width="1" height="1"/>
<rect x="583" y="421" width="1" height="1"/>
<rect x="583" y="422" width="1" height="1"/>
<rect x="583" y="425" width="1" height="1"/>
<rect x="583" y="426" width="1" height="1"/>
<rect x="579" y="397" width="1" height="1"/>
<rect x="577" y="395" width="1" height="1"/>
<rect x="362" y="334" width="1" height="1"/>
<rect x="369" y="335" width="1" height="1"/>
<rect x="358" y="337" width="1" height="1"/>
<rect x="360" y="337" width="1" height="1"/>
<rect x="355" y="340" width="1" height="1"/>
<rect x="369" y="339" width="1" height="1"/>
<rect x="360" y="346" width="1" height="1"/>
<rect x="362" y="346" width="1" height="1"/>
<rect x="365" y="345" width="1" height="1"/>
<rect x="365" y="348" width="1" height="1"/>
<rect x="362" y="353" width="1" height="1"/>
<rect x="362" y="354" width="1" height="1"/>
<rect x="368" y="357" width="1" height="1"/>
<rect x="368" y="361" width="1" height="1"/>
<rect x="400" y="352" width="1" height="1"/>
<rect x="413" y="332" width="1" height="1"/>
<rect x="416" y="334" width="1" height="1"/>
<rect x="409" y="336" width="1" height="1"/>
<rect x="416" y="339" width="1" height="1"/>
<rect x="413" y="344" width="1" height="1"/>
<rect x="409" y="345" width="1" height="1"/>
<rect x="408" y="347" width="1" height="1"/>
<rect x="414" y="352" width="1" height="1"/>
<rect x="414" y="353" width="1" height="1"/>
<rect x="410" y="353" width="1" height="1"/>
<rect x="407" y="355" width="1" height="1"/>
<rect x="412" y="359" width="1" height="1"/>
<rect x="413" y="361" width="1" height="1"/>
<rect x="408" y="361" width="1" height="1"/>
<rect x="408" y="362" width="1" height="1"/>
<rect x="415" y="361" width="1" height="1"/>
<rect x="359" y="368" width="1" height="1"/>
<rect x="364" y="369" width="1" height="1"/>
<rect x="359" y="377" width="1" height="1"/>
<rect x="367" y="377" width="1" height="1"/>
<rect x="366" y="379" width="1" height="1"/>
<rect x="364" y="380" width="1" height="1"/>
<rect x="361" y="382" width="1" height="1"/>
<rect x="362" y="382" width="1" height="1"/>
<rect x="364" y="384" width="1" height="1"/>
<rect x="366" y="385" width="1" height="1"/>
<rect x="362" y="385" width="1" height="1"/>
<rect x="362" y="386" width="1" height="1"/>
<rect x="362" y="387" width="1" height="1"/>
<rect x="377" y="383" width="1" height="1"/>
<rect x="386" y="378" width="1" height="1"/>
<rect x="386" y="380" width="1" height="1"/>
<rect x="351" y="385" width="1" height="1"/>
<rect x="360" y="393" width="1" height="1"/>
<rect x="356" y="400" width="1" height="1"/>
<rect x="356" y="402" width="1" height="1"/>
<rect x="356" y="403" width="1" height="1"/>
<rect x="360" y="400" width="1" height="1"/>
<rect x="364" y="402" width="1" height="1"/>
<rect x="364" y="403" width="1" height="1"/>
<rect x="365" y="399" width="1" height="1"/>
<rect x="367" y="399" width="1" height="1"/>
<rect x="363" y="406" width="1" height="1"/>
<rect x="363" y="408" width="1" height="1"/>
<rect x="356" y="408" width="1" height="1"/>
<rect x="356" y="409" width="1" height="1"/>
<rect x="359" y="412" width="1" height="1"/>
<rect x="363" y="413" width="1" height="1"/>
<rect x="375" y="413" width="1" height="1"/>
<rect x="381" y="415" width="1" height="1"/>
<rect x="368" y="417" width="1" height="1"/>
<rect x="357" y="418" width="1" height="1"/>
<rect x="357" y="419" width="1" height="1"/>
<rect x="357" y="421" width="1" height="1"/>
<rect x="359" y="421" width="1" height="1"/>
<rect x="364" y="419" width="1" height="1"/>
<rect x="366" y="424" width="1" height="1"/>
<rect x="366" y="425" width="1" height="1"/>
<rect x="390" y="410" width="1" height="1"/>
<rect x="390" y="414" width="1" height="1"/>
<rect x="407" y="376" width="1" height="1"/>
<rect x="407" y="377" width="1" height="1"/>
<rect x="407" y="381" width="1" height="1"/>
<rect x="414" y="377" width="1" height="1"/>
<rect x="417" y="376" width="1" height="1"/>
<rect x="417" y="377" width="1" height="1"/>
<rect x="415" y="383" width="1" height="1"/>
<rect x="416" y="383" width="1" height="1"/>
<rect x="418" y="389" width="1" height="1"/>
<rect x="413" y="391" width="1" height="1"/>
<rect x="413" y="392" width="1" height="1"/>
<rect x="407" y="392" width="1" height="1"/>
<rect x="418" y="396" width="1" height="1"/>
<rect x="407" y="419" width="1" height="1"/>
<rect x="410" y="418" width="1" height="1"/>
<rect x="410" y="421" width="1" height="1"/>
<rect x="413" y="419" width="1" height="1"/>
<rect x="414" y="424" width="1" height="1"/>
<rect x="411" y="425" width="1" height="1"/>
<rect x="413" y="426" width="1" height="1"/>
<rect x="410" y="353" width="1" height="1"/>
<rect x="414" y="352" width="1" height="1"/>
<rect x="412" y="359" width="1" height="1"/>
<rect x="414" y="366" width="1" height="1"/>
<rect x="417" y="376" width="1" height="1"/>
<rect x="417" y="377" width="1" height="1"/>
<rect x="414" y="377" width="1" height="1"/>
<rect x="415" y="383" width="1" height="1"/>
<rect x="416" y="383" width="1" height="1"/>
<rect x="418" y="389" width="1" height="1"/>
<rect x="413" y="391" width="1" height="1"/>
<rect x="413" y="392" width="1" height="1"/>
<rect x="418" y="396" width="1" height="1"/>
<rect x="409" y="406" width="1" height="1"/>
<rect x="414" y="404" width="1" height="1"/>
<rect x="410" y="419" width="1" height="1"/>
<rect x="413" y="419" width="1" height="1"/>
<rect x="487" y="389" width="1" height="1"/>
<rect x="426" y="345" width="1" height="1"/>
<rect x="490" y="346" width="1" height="1"/>
<rect x="490" y="347" width="1" height="1"/>
<rect x="507" y="374" width="1" height="1"/>
<rect x="507" y="375" width="1" height="1"/>
<rect x="487" y="389" width="1" height="1"/>
<rect x="507" y="374" width="1" height="1"/>
<rect x="507" y="375" width="1" height="1"/>
<rect x="513" y="371" width="1" height="1"/>
<rect x="513" y="372" width="1" height="1"/>
<rect x="513" y="374" width="1" height="1"/>
<rect x="511" y="393" width="1" height="1"/>
<rect x="510" y="410" width="1" height="1"/>
<rect x="488" y="423" width="1" height="1"/>
<rect x="358" y="347" width="1" height="1"/>
<rect x="353" y="383" width="1" height="1"/>
<rect x="360" y="410" width="1" height="1"/>
<rect x="354" y="354" width="1" height="1"/>
<rect x="371" y="387" width="1" height="1"/>
<rect x="372" y="337" width="1" height="1"/>
<rect x="358" y="409" width="1" height="1"/>
<rect x="356" y="387" width="1" height="1"/>
<rect x="353" y="352" width="1" height="1"/>
<rect x="361" y="362" width="1" height="1"/>
<rect x="361" y="361" width="1" height="1"/>
<rect x="366" y="356" width="1" height="1"/>
<rect x="363" y="414" width="1" height="1"/>
<rect x="367" y="360" width="1" height="1"/>
<rect x="354" y="372" width="1" height="1"/>
<rect x="365" y="404" width="1" height="1"/>
<rect x="363" y="414" width="1" height="1"/>
<rect x="358" y="398" width="1" height="1"/>
<rect x="364" y="387" width="1" height="1"/>
<rect x="369" y="421" width="1" height="1"/>
<rect x="366" y="393" width="1" height="1"/>
<rect x="368" y="359" width="1" height="1"/>
<rect x="365" y="335" width="1" height="1"/>
<rect x="412" y="414" width="1" height="1"/>
<rect x="404" y="375" width="1" height="1"/>
<rect x="424" y="409" width="1" height="1"/>
<rect x="424" y="359" width="1" height="1"/>
<rect x="411" y="415" width="1" height="1"/>
<rect x="408" y="355" width="1" height="1"/>
<rect x="412" y="367" width="1" height="1"/>
<rect x="426" y="397" width="1" height="1"/>
<rect x="415" y="390" width="1" height="1"/>
<rect x="403" y="417" width="1" height="1"/>
<rect x="421" y="414" width="1" height="1"/>
<rect x="422" y="369" width="1" height="1"/>
<rect x="406" y="342" width="1" height="1"/>
<rect x="403" y="414" width="1" height="1"/>
<rect x="423" y="425" width="1" height="1"/>
<rect x="574" y="348" width="1" height="1"/>
<rect x="514" y="421" width="1" height="1"/>
<rect x="552" y="347" width="1" height="1"/>
<rect x="553" y="336" width="1" height="1"/>
<rect x="552" y="424" width="1" height="1"/>
<rect x="577" y="398" width="1" height="1"/>
<rect x="532" y="367" width="1" height="1"/>
<rect x="525" y="405" width="1" height="1"/>
<rect x="552" y="405" width="1" height="1"/>
<rect x="537" y="354" width="1" height="1"/>
<rect x="573" y="425" width="1" height="1"/>
<rect x="576" y="408" width="1" height="1"/>
<rect x="573" y="402" width="1" height="1"/>
<rect x="529" y="381" width="1" height="1"/>
<rect x="539" y="336" width="1" height="1"/>
<rect x="514" y="359" width="1" height="1"/>
<rect x="531" y="397" width="1" height="1"/>
<rect x="584" y="375" width="1" height="1"/>
<rect x="582" y="425" width="1" height="1"/>
<rect x="584" y="367" width="1" height="1"/>
<rect x="529" y="354" width="1" height="1"/>
<rect x="527" y="352" width="1" height="1"/>
<rect x="559" y="417" width="1" height="1"/>
<rect x="575" y="378" width="1" height="1"/>
<rect x="561" y="407" width="1" height="1"/>
<rect x="518" y="394" width="1" height="1"/>
<rect x="580" y="406" width="1" height="1"/>
<rect x="568" y="377" width="1" height="1"/>
<rect x="525" y="406" width="1" height="1"/>
<rect x="537" y="407" width="1" height="1"/>
<rect x="585" y="370" width="1" height="1"/>
<rect x="542" y="421" width="1" height="1"/>
<rect x="566" y="349" width="1" height="1"/>
<rect x="522" y="347" width="1" height="1"/>
<rect x="580" y="408" width="1" height="1"/>
<rect x="523" y="410" width="1" height="1"/>
<rect x="586" y="394" width="1" height="1"/>
<rect x="538" y="384" width="1" height="1"/>
<rect x="522" y="334" width="1" height="1"/>
<rect x="585" y="393" width="1" height="1"/>
<rect x="551" y="420" width="1" height="1"/>
<rect x="545" y="414" width="1" height="1"/>
<rect x="574" y="353" width="1" height="1"/>
<rect x="531" y="360" width="1" height="1"/>
<rect x="530" y="388" width="1" height="1"/>
<rect x="531" y="372" width="1" height="1"/>
<rect x="522" y="418" width="1" height="1"/>
<rect x="539" y="376" width="1" height="1"/>
<rect x="556" y="417" width="1" height="1"/>
<rect x="544" y="418" width="1" height="1"/>
<rect x="550" y="382" width="1" height="1"/>
<rect x="551" y="335" width="1" height="1"/>
<rect x="545" y="350" width="1" height="1"/>
<rect x="512" y="407" width="1" height="1"/>
<rect x="525" y="377" width="1" height="1"/>
<rect x="566" y="385" width="1" height="1"/>
<rect x="536" y="381" width="1" height="1"/>
<rect x="554" y="406" width="1" height="1"/>
<rect x="520" y="385" width="1" height="1"/>
<rect x="531" y="359" width="1" height="1"/>
<rect x="570" y="380" width="1" height="1"/>
<rect x="554" y="404" width="1" height="1"/>
<rect x="580" y="374" width="1" height="1"/>
<rect x="558" y="380" width="1" height="1"/>
<rect x="550" y="397" width="1" height="1"/>
<rect x="546" y="383" width="1" height="1"/>
<rect x="548" y="421" width="1" height="1"/>
<rect x="564" y="415" width="1" height="1"/>
<rect x="583" y="357" width="1" height="1"/>
<rect x="554" y="421" width="1" height="1"/>
<rect x="575" y="346" width="1" height="1"/>
<rect x="521" y="374" width="1" height="1"/>
<rect x="517" y="355" width="1" height="1"/>
<rect x="517" y="395" width="1" height="1"/>
<rect x="571" y="416" width="1" height="1"/>
<rect x="524" y="400" width="1" height="1"/>
<rect x="562" y="346" width="1" height="1"/>
<rect x="578" y="423" width="1" height="1"/>
<rect x="528" y="422" width="1" height="1"/>
<rect x="542" y="378" width="1" height="1"/>
<rect x="586" y="410" width="1" height="1"/>
<rect x="524" y="373" width="1" height="1"/>
<rect x="551" y="365" width="1" height="1"/>
<rect x="527" y="363" width="1" height="1"/>
<rect x="566" y="335" width="1" height="1"/>
<rect x="554" y="374" width="1" height="1"/>
<rect x="513" y="364" width="1" height="1"/>
<rect x="559" y="381" width="1" height="1"/>
<rect x="517" y="425" width="1" height="1"/>
<rect x="571" y="423" width="1" height="1"/>
<rect x="520" y="358" width="1" height="1"/>
<rect x="515" y="405" width="1" height="1"/>
<rect x="532" y="345" width="1" height="1"/>
<rect x="544" y="418" width="1" height="1"/>
<rect x="573" y="357" width="1" height="1"/>
<rect x="523" y="418" width="1" height="1"/>
<rect x="555" y="398" width="1" height="1"/>
<rect x="519" y="338" width="1" height="1"/>
<rect x="564" y="373" width="1" height="1"/>
<rect x="517" y="420" width="1" height="1"/>
<rect x="560" y="408" width="1" height="1"/>
<rect x="518" y="413" width="1" height="1"/>
<rect x="517" y="413" width="1" height="1"/>
<rect x="546" y="365" width="1" height="1"/>
<rect x="553" y="419" width="1" height="1"/>
<rect x="532" y="345" width="1" height="1"/>
<rect x="552" y="355" width="1" height="1"/>
<rect x="520" y="348" width="1" height="1"/>
<rect x="516" y="352" width="1" height="1"/>
<rect x="535" y="361" width="1" height="1"/>
<rect x="569" y="360" width="1" height="1"/>
<rect x="550" y="350" width="1" height="1"/>
<rect x="538" y="335" width="1" height="1"/>
<rect x="531" y="334" width="1" height="1"/>
<rect x="567" y="384" width="1" height="1"/>
<rect x="526" y="377" width="1" height="1"/>
<rect x="582" y="343" width="1" height="1"/>
<rect x="573" y="373" width="1" height="1"/>
<rect x="549" y="411" width="1" height="1"/>
<rect x="541" y="380" width="1" height="1"/>
<rect x="564" y="424" width="1" height="1"/>
<rect x="538" y="410" width="1" height="1"/>
<rect x="565" y="392" width="1" height="1"/>
<rect x="542" y="365" width="1" height="1"/>
<rect x="516" y="345" width="1" height="1"/>
<rect x="517" y="402" width="1" height="1"/>
<rect x="531" y="348" width="1" height="1"/>
<rect x="518" y="411" width="1" height="1"/>
<rect x="577" y="395" width="1" height="1"/>
<rect x="533" y="356" width="1" height="1"/>
<rect x="534" y="376" width="1" height="1"/>
<rect x="524" y="374" width="1" height="1"/>
<rect x="532" y="422" width="1" height="1"/>
<rect x="585" y="384" width="1" height="1"/>
<rect x="530" y="423" width="1" height="1"/>
<rect x="535" y="366" width="1" height="1"/>
<rect x="512" y="368" width="1" height="1"/>
<rect x="548" y="380" width="1" height="1"/>
<rect x="527" y="380" width="1" height="1"/>
<rect x="512" y="358" width="1" height="1"/>
<rect x="519" y="370" width="1" height="1"/>
<rect x="515" y="335" width="1" height="1"/>
<rect x="535" y="355" width="1" height="1"/>
<rect x="556" y="382" width="1" height="1"/>
<rect x="568" y="394" width="1" height="1"/>
<rect x="566" y="415" width="1" height="1"/>
<rect x="541" y="363" width="1" height="1"/>
<rect x="586" y="347" width="1" height="1"/>
<rect x="566" y="393" width="1" height="1"/>
<rect x="515" y="411" width="1" height="1"/>
<rect x="579" y="391" width="1" height="1"/>
<rect x="567" y="409" width="1" height="1"/>
<rect x="522" y="382" width="1" height="1"/>
<rect x="550" y="411" width="1" height="1"/>
<rect x="572" y="410" width="1" height="1"/>
<rect x="556" y="416" width="1" height="1"/>
<rect x="563" y="397" width="1" height="1"/>
<rect x="529" y="336" width="1" height="1"/>
<rect x="522" y="367" width="1" height="1"/>
<rect x="520" y="411" width="1" height="1"/>
<rect x="554" y="391" width="1" height="1"/>
<rect x="559" y="396" width="1" height="1"/>
<rect x="549" y="333" width="1" height="1"/>
<rect x="572" y="403" width="1" height="1"/>
<rect x="550" y="383" width="1" height="1"/>
<rect x="561" y="339" width="1" height="1"/>
<rect x="567" y="356" width="1" height="1"/>
<rect x="518" y="358" width="1" height="1"/>
<rect x="567" y="352" width="1" height="1"/>
<rect x="567" y="424" width="1" height="1"/>
<rect x="549" y="369" width="1" height="1"/>
<rect x="548" y="397" width="1" height="1"/>
<rect x="570" y="390" width="1" height="1"/>
<rect x="560" y="340" width="1" height="1"/>
<rect x="523" y="357" width="1" height="1"/>
<rect x="568" y="361" width="1" height="1"/>
<rect x="555" y="334" width="1" height="1"/>
<rect x="517" y="358" width="1" height="1"/>
<rect x="562" y="397" width="1" height="1"/>
<rect x="563" y="360" width="1" height="1"/>
<rect x="387" y="376" width="1" height="1"/>
<rect x="376" y="416" width="1" height="1"/>
<rect x="378" y="424" width="1" height="1"/>
<rect x="400" y="335" width="1" height="1"/>
<rect x="397" y="423" width="1" height="1"/>
<rect x="507" y="353" width="1" height="1"/>
<rect x="439" y="382" width="1" height="1"/>
<rect x="438" y="409" width="1" height="1"/>
<rect x="470" y="415" width="1" height="1"/>
<rect x="487" y="355" width="1" height="1"/>
<rect x="469" y="375" width="1" height="1"/>
<rect x="439" y="365" width="1" height="1"/>
</g>
<g shape-rendering="crispEdges">
<polyline points="367.467,426.697 369.561,426.303 373.4,425.829 376.89,425.316 378.984,424.842 382.125,423.935 383.87,423.145" fill="none" stroke="#fff" stroke-width="2" stroke-linejoin="round" stroke-linecap="butt" stroke-dasharray="2.2 1"/>
<polyline points="387.884,411.107 388.407,411.896 389.803,412.212 391.199,412.015 392.595,411.502 393.642,410.712 394.776,409.765 396.957,408.048 399.139,406.074 401.32,404.357 403.501,402.858 404.81,402.305 408.3,402.226 412.663,401.792 418.77,402.423 425.75,402.818 434.475,403.015 443.2,402.621 451.925,401.831 460.65,401.141 469.375,400.154 476.355,399.068" fill="none" stroke="#fff" stroke-width="1.8" stroke-linejoin="round" stroke-linecap="butt" stroke-dasharray="2.2 1"/>
<polyline points="476.355,398.674 481.59,397.194 486.825,395.714 490.315,394.233 494.678,391.767 497.295,389.3 499.476,386.339 501.221,382.886 502.094,379.925 502.356,377.952" fill="none" stroke="#fff" stroke-width="1.3" stroke-linejoin="round" stroke-linecap="butt" stroke-dasharray="2 1"/>
<polyline points="476.355,399.463 488.57,397.194 497.295,394.727 502.53,392.26 506.892,389.3 509.51,385.846 511.081,382.886 511.255,382.294" fill="none" stroke="#fff" stroke-width="1.3" stroke-linejoin="round" stroke-linecap="butt" stroke-dasharray="2 1"/>
<polyline points="424.354,399.661 429.938,399.858 436.22,400.45 444.945,401.239" fill="none" stroke="#fff" stroke-width="1" stroke-linejoin="round" stroke-linecap="butt" stroke-dasharray="1 2"/>
</g>
<g shape-rendering="crispEdges">
<rect x="640.5" y="330.5" width="252" height="98" fill="none" stroke="#808080" stroke-width="1"/>
</g>
<g shape-rendering="crispEdges" fill="#484848">
<rect x="844" y="375" width="1" height="1"/>
<rect x="835" y="392" width="1" height="1"/>
<rect x="832" y="346" width="1" height="1"/>
<rect x="862" y="388" width="1" height="1"/>
<rect x="854" y="391" width="1" height="1"/>
<rect x="880" y="351" width="1" height="1"/>
<rect x="831" y="363" width="1" height="1"/>
<rect x="865" y="393" width="1" height="1"/>
<rect x="847" y="394" width="1" height="1"/>
<rect x="854" y="399" width="1" height="1"/>
<rect x="836" y="336" width="1" height="1"/>
<rect x="864" y="412" width="1" height="1"/>
<rect x="853" y="353" width="1" height="1"/>
<rect x="831" y="424" width="1" height="1"/>
<rect x="854" y="405" width="1" height="1"/>
<rect x="832" y="334" width="1" height="1"/>
<rect x="855" y="356" width="1" height="1"/>
<rect x="831" y="350" width="1" height="1"/>
<rect x="864" y="425" width="1" height="1"/>
<rect x="840" y="344" width="1" height="1"/>
<rect x="835" y="413" width="1" height="1"/>
<rect x="888" y="353" width="1" height="1"/>
<rect x="854" y="337" width="1" height="1"/>
<rect x="839" y="405" width="1" height="1"/>
<rect x="850" y="340" width="1" height="1"/>
<rect x="843" y="389" width="1" height="1"/>
<rect x="841" y="410" width="1" height="1"/>
<rect x="838" y="362" width="1" height="1"/>
<rect x="672" y="382" width="1" height="1"/>
<rect x="674" y="386" width="1" height="1"/>
<rect x="673" y="397" width="1" height="1"/>
<rect x="675" y="402" width="1" height="1"/>
<rect x="726" y="345" width="1" height="1"/>
<rect x="725" y="377" width="1" height="1"/>
<rect x="723" y="423" width="1" height="1"/>
<rect x="861" y="423" width="1" height="1"/>
<rect x="867" y="424" width="1" height="1"/>
<rect x="875" y="424" width="1" height="1"/>
<rect x="883" y="423" width="1" height="1"/>
</g>
<g shape-rendering="crispEdges">
<polyline points="681,424.3 685,422.8 689,420.8" fill="none" stroke="#fff" stroke-width="1.8" stroke-linejoin="round" stroke-linecap="butt" stroke-dasharray="2.2 1"/>
<polyline points="692.5,411.8 696,409.3 700.4,406.5 704,404.3 707.4,402.7 710,402.6" fill="none" stroke="#fff" stroke-width="1.8" stroke-linejoin="round" stroke-linecap="butt" stroke-dasharray="2.2 1"/>
<polyline points="724,402 730,402" fill="none" stroke="#fff" stroke-width="1.8" stroke-linejoin="round" stroke-linecap="butt" stroke-dasharray="2 1"/>
<polyline points="783,399.7 788,398 793.5,395" fill="none" stroke="#fff" stroke-width="2" stroke-linejoin="round" stroke-linecap="butt" stroke-dasharray="2.2 1"/>
<polyline points="793.5,395 797,392.5 800.5,389.9 802.5,386.5 804,382.8 805.4,377.6" fill="none" stroke="#fff" stroke-width="1.2" stroke-linejoin="round" stroke-linecap="butt" stroke-dasharray="2 1"/>
<polyline points="790,397.8 797,396 804,393.4 808,391.3 811,389 813,386.5 814.5,383.7" fill="none" stroke="#fff" stroke-width="1.3" stroke-linejoin="round" stroke-linecap="butt" stroke-dasharray="2 1"/>
</g>
<text x="161.2" y="444" fill="#808080" text-anchor="middle" textLength="114.5" lengthAdjust="spacingAndGlyphs" font-weight="400">original ionogram resized</text>
<text x="463.5" y="444" fill="#808080" text-anchor="middle" textLength="129.5" lengthAdjust="spacingAndGlyphs" font-weight="400">eliminate multiple reflections</text>
<text x="765.5" y="444" fill="#808080" text-anchor="middle" textLength="85.5" lengthAdjust="spacingAndGlyphs" font-weight="400">evidence F2 trace</text>
<!-- lower ionogram -->
<g shape-rendering="crispEdges" fill="#8c8c8c">
<rect x="523" y="479" width="1.5" height="1.6"/>
<rect x="525" y="484" width="1.5" height="1.6"/>
<rect x="533" y="479" width="1.5" height="1.6"/>
<rect x="541" y="478" width="1.5" height="3"/>
<rect x="545" y="476" width="1.5" height="3"/>
<rect x="551" y="472" width="1.5" height="1.6"/>
<rect x="551" y="479" width="1.5" height="1.6"/>
<rect x="576" y="474" width="1.5" height="1.6"/>
<rect x="585" y="472" width="1.5" height="1.6"/>
<rect x="586" y="479" width="1.5" height="3"/>
<rect x="580" y="486" width="1.5" height="6"/>
<rect x="585" y="485" width="1.5" height="4"/>
<rect x="570" y="491" width="1.5" height="1.6"/>
<rect x="592" y="489" width="1.5" height="1.6"/>
<rect x="612" y="471" width="1.5" height="1.6"/>
<rect x="628" y="475" width="1.5" height="8"/>
<rect x="628" y="488" width="1.5" height="1.6"/>
<rect x="606" y="492" width="1.5" height="3"/>
<rect x="638" y="481" width="1.5" height="1.6"/>
<rect x="676" y="471" width="1.5" height="1.6"/>
<rect x="676" y="475" width="1.5" height="1.6"/>
<rect x="686" y="471" width="1.5" height="1.6"/>
<rect x="700" y="490" width="1.5" height="1.6"/>
<rect x="706" y="491" width="1.5" height="1.6"/>
<rect x="712" y="475" width="1.5" height="4"/>
<rect x="513" y="507" width="1.5" height="1.6"/>
<rect x="519" y="509" width="1.5" height="1.6"/>
<rect x="523" y="507" width="1.5" height="1.6"/>
<rect x="539" y="502" width="1.5" height="1.6"/>
<rect x="549" y="511" width="1.5" height="1.6"/>
<rect x="529" y="518" width="1.5" height="1.6"/>
<rect x="549" y="521" width="1.5" height="1.6"/>
<rect x="543" y="528" width="1.5" height="1.6"/>
<rect x="507" y="518" width="1.5" height="1.6"/>
<rect x="507" y="524" width="1.5" height="3"/>
<rect x="507" y="528" width="1.5" height="1.6"/>
<rect x="509" y="532" width="1.5" height="4"/>
<rect x="557" y="500" width="1.5" height="1.6"/>
<rect x="586" y="498" width="1.5" height="3"/>
<rect x="584" y="505" width="1.5" height="1.6"/>
<rect x="580" y="509" width="1.5" height="1.6"/>
<rect x="586" y="509" width="1.5" height="1.6"/>
<rect x="580" y="522" width="1.5" height="3"/>
<rect x="584" y="525" width="1.5" height="1.6"/>
<rect x="590" y="527" width="1.5" height="1.6"/>
<rect x="618" y="510" width="1.5" height="9"/>
<rect x="618" y="519" width="1.5" height="1.6"/>
<rect x="600" y="526" width="1.5" height="1.6"/>
<rect x="610" y="528" width="1.5" height="1.6"/>
<rect x="658" y="505" width="1.5" height="1.6"/>
<rect x="668" y="521" width="1.5" height="1.6"/>
<rect x="706" y="500" width="1.5" height="6"/>
<rect x="700" y="509" width="1.5" height="1.6"/>
<rect x="694" y="509" width="1.5" height="1.6"/>
<rect x="692" y="518" width="1.5" height="1.6"/>
<rect x="694" y="521" width="1.5" height="1.6"/>
<rect x="710" y="528" width="1.5" height="1.6"/>
<rect x="517" y="537" width="1.5" height="1.6"/>
<rect x="543" y="549" width="1.5" height="1.6"/>
<rect x="533" y="556" width="1.5" height="3"/>
<rect x="547" y="558" width="1.5" height="1.6"/>
<rect x="543" y="562" width="1.5" height="1.6"/>
<rect x="515" y="558" width="1.5" height="1.6"/>
<rect x="515" y="564" width="1.5" height="6"/>
<rect x="525" y="565" width="1.5" height="1.6"/>
<rect x="533" y="565" width="1.5" height="1.6"/>
<rect x="533" y="570" width="1.5" height="3"/>
<rect x="610" y="535" width="1.5" height="1.6"/>
<rect x="610" y="541" width="1.5" height="1.6"/>
<rect x="610" y="546" width="1.5" height="1.6"/>
<rect x="594" y="549" width="1.5" height="1.6"/>
<rect x="598" y="553" width="1.5" height="1.6"/>
<rect x="604" y="550" width="1.5" height="1.6"/>
<rect x="604" y="554" width="1.5" height="4"/>
<rect x="604" y="561" width="1.5" height="3"/>
<rect x="626" y="549" width="1.5" height="1.6"/>
<rect x="626" y="558" width="1.5" height="1.6"/>
<rect x="630" y="569" width="1.5" height="1.6"/>
<rect x="640" y="568" width="1.5" height="1.6"/>
<rect x="668" y="541" width="1.5" height="1.6"/>
<rect x="668" y="546" width="1.5" height="1.6"/>
<rect x="694" y="539" width="1.5" height="1.6"/>
<rect x="694" y="548" width="1.5" height="1.6"/>
<rect x="694" y="553" width="1.5" height="1.6"/>
<rect x="684" y="549" width="1.5" height="1.6"/>
<rect x="692" y="566" width="1.5" height="4"/>
<rect x="708" y="564" width="1.5" height="1.6"/>
<rect x="483" y="591" width="1.5" height="4"/>
<rect x="501" y="584" width="1.5" height="4"/>
<rect x="499" y="588" width="1.5" height="1.6"/>
<rect x="499" y="592" width="1.5" height="1.6"/>
<rect x="531" y="576" width="1.5" height="1.6"/>
<rect x="533" y="574" width="1.5" height="1.6"/>
<rect x="535" y="590" width="1.5" height="1.6"/>
<rect x="551" y="604" width="1.5" height="1.6"/>
<rect x="559" y="571" width="1.5" height="1.6"/>
<rect x="559" y="577" width="1.5" height="4"/>
<rect x="564" y="579" width="1.5" height="1.6"/>
<rect x="576" y="583" width="1.5" height="1.6"/>
<rect x="582" y="581" width="1.5" height="1.6"/>
<rect x="565" y="589" width="1.5" height="4"/>
<rect x="568" y="592" width="1.5" height="1.6"/>
<rect x="578" y="590" width="1.5" height="1.6"/>
<rect x="576" y="593" width="1.5" height="1.6"/>
<rect x="582" y="596" width="1.5" height="1.6"/>
<rect x="582" y="600" width="1.5" height="1.6"/>
<rect x="570" y="601" width="1.5" height="4"/>
<rect x="555" y="598" width="1.5" height="1.6"/>
<rect x="630" y="576" width="1.5" height="1.6"/>
<rect x="612" y="600" width="1.5" height="1.6"/>
<rect x="612" y="606" width="1.5" height="1.6"/>
<rect x="622" y="609" width="1.5" height="1.6"/>
<rect x="634" y="598" width="1.5" height="1.6"/>
<rect x="640" y="586" width="1.5" height="1.6"/>
<rect x="650" y="584" width="1.5" height="4"/>
<rect x="650" y="599" width="1.5" height="1.6"/>
<rect x="660" y="596" width="1.5" height="4"/>
<rect x="660" y="606" width="1.5" height="1.6"/>
<rect x="666" y="572" width="1.5" height="1.6"/>
<rect x="666" y="579" width="1.5" height="4"/>
<rect x="666" y="584" width="1.5" height="1.6"/>
<rect x="670" y="601" width="1.5" height="6"/>
<rect x="670" y="609" width="1.5" height="4"/>
<rect x="670" y="612" width="1.5" height="1.6"/>
<rect x="686" y="600" width="1.5" height="1.6"/>
<rect x="712" y="588" width="1.5" height="1.6"/>
<rect x="712" y="602" width="1.5" height="5"/>
<rect x="519" y="610" width="1.5" height="3"/>
<rect x="519" y="615" width="1.5" height="4"/>
<rect x="519" y="620" width="1.5" height="1.6"/>
<rect x="519" y="625" width="1.5" height="1.6"/>
<rect x="525" y="611" width="1.5" height="1.6"/>
<rect x="535" y="612" width="1.5" height="1.6"/>
<rect x="541" y="611" width="1.5" height="1.6"/>
<rect x="545" y="611" width="1.5" height="1.6"/>
<rect x="551" y="611" width="1.5" height="1.6"/>
<rect x="551" y="618" width="1.5" height="1.6"/>
<rect x="535" y="624" width="1.5" height="4"/>
<rect x="545" y="630" width="1.5" height="1.6"/>
<rect x="549" y="634" width="1.5" height="1.6"/>
<rect x="529" y="638" width="1.5" height="4"/>
<rect x="505" y="619" width="1.5" height="4"/>
<rect x="505" y="628" width="1.5" height="6"/>
<rect x="505" y="634" width="1.5" height="1.6"/>
<rect x="507" y="645" width="1.5" height="4"/>
<rect x="493" y="639" width="1.5" height="1.6"/>
<rect x="555" y="614" width="1.5" height="4"/>
<rect x="555" y="625" width="1.5" height="8"/>
<rect x="568" y="613" width="1.5" height="3"/>
<rect x="562" y="642" width="1.5" height="1.6"/>
<rect x="596" y="618" width="1.5" height="1.6"/>
<rect x="606" y="617" width="1.5" height="5"/>
<rect x="592" y="627" width="1.5" height="1.6"/>
<rect x="592" y="636" width="1.5" height="1.6"/>
<rect x="622" y="623" width="1.5" height="1.6"/>
<rect x="690" y="633" width="1.5" height="5"/>
<rect x="700" y="611" width="1.5" height="1.6"/>
<rect x="684" y="645" width="1.5" height="1.6"/>
<rect x="632" y="646" width="1.5" height="1.6"/>
<rect x="507" y="660" width="1.5" height="1.6"/>
<rect x="501" y="666" width="3" height="1.6"/>
<rect x="507" y="668" width="1.5" height="1.6"/>
<rect x="511" y="669" width="1.5" height="1.6"/>
<rect x="511" y="674" width="1.5" height="1.6"/>
<rect x="511" y="681" width="1.5" height="1.6"/>
<rect x="511" y="685" width="1.5" height="1.6"/>
<rect x="491" y="683" width="1.5" height="1.6"/>
<rect x="527" y="662" width="1.5" height="1.6"/>
<rect x="533" y="658" width="1.5" height="1.6"/>
<rect x="539" y="655" width="1.5" height="1.6"/>
<rect x="549" y="653" width="1.5" height="1.6"/>
<rect x="533" y="666" width="1.5" height="1.6"/>
<rect x="527" y="676" width="1.5" height="1.6"/>
<rect x="527" y="688" width="1.5" height="1.6"/>
<rect x="537" y="687" width="1.5" height="1.6"/>
<rect x="527" y="690" width="1.5" height="1.6"/>
<rect x="521" y="701" width="1.5" height="1.6"/>
<rect x="527" y="700" width="1.5" height="4"/>
<rect x="537" y="699" width="1.5" height="1.6"/>
<rect x="531" y="720" width="1.5" height="1.6"/>
<rect x="535" y="724" width="1.5" height="1.6"/>
<rect x="531" y="725" width="1.5" height="1.6"/>
<rect x="547" y="718" width="1.5" height="1.6"/>
<rect x="515" y="731" width="1.5" height="1.6"/>
<rect x="531" y="729" width="1.5" height="1.6"/>
<rect x="541" y="731" width="1.5" height="1.6"/>
<rect x="564" y="655" width="1.5" height="1.6"/>
<rect x="561" y="659" width="1.5" height="1.6"/>
<rect x="564" y="664" width="1.5" height="1.6"/>
<rect x="574" y="668" width="1.5" height="1.6"/>
<rect x="572" y="674" width="1.5" height="1.6"/>
<rect x="574" y="681" width="1.5" height="1.6"/>
<rect x="570" y="686" width="1.5" height="4"/>
<rect x="564" y="685" width="1.5" height="1.6"/>
<rect x="572" y="696" width="1.5" height="5"/>
<rect x="576" y="706" width="1.5" height="1.6"/>
<rect x="572" y="714" width="1.5" height="1.6"/>
<rect x="576" y="715" width="1.5" height="1.6"/>
<rect x="566" y="716" width="1.5" height="4"/>
<rect x="566" y="722" width="1.5" height="6"/>
<rect x="620" y="675" width="1.5" height="9"/>
<rect x="620" y="685" width="1.5" height="1.6"/>
<rect x="620" y="688" width="1.5" height="1.6"/>
<rect x="624" y="711" width="1.5" height="3"/>
<rect x="624" y="728" width="1.5" height="3"/>
<rect x="628" y="731" width="1.5" height="1.6"/>
<rect x="634" y="725" width="1.5" height="1.6"/>
<rect x="634" y="731" width="1.5" height="1.6"/>
<rect x="656" y="724" width="1.5" height="1.6"/>
<rect x="662" y="704" width="1.5" height="1.6"/>
<rect x="666" y="722" width="1.5" height="1.6"/>
<rect x="672" y="692" width="1.5" height="1.6"/>
<rect x="672" y="702" width="1.5" height="1.6"/>
<rect x="672" y="726" width="1.5" height="1.6"/>
<rect x="676" y="723" width="1.5" height="4"/>
<rect x="682" y="694" width="1.5" height="1.6"/>
<rect x="678" y="676" width="1.5" height="1.6"/>
<rect x="688" y="678" width="1.5" height="1.6"/>
<rect x="690" y="671" width="1.5" height="1.6"/>
<rect x="690" y="659" width="1.5" height="1.6"/>
<rect x="700" y="666" width="1.5" height="1.6"/>
<rect x="702" y="680" width="1.5" height="1.6"/>
<rect x="702" y="698" width="1.5" height="1.6"/>
<rect x="702" y="711" width="1.5" height="5"/>
<rect x="702" y="720" width="1.5" height="4"/>
<rect x="702" y="726" width="1.5" height="1.6"/>
<rect x="708" y="724" width="1.5" height="1.6"/>
<rect x="696" y="731" width="1.5" height="1.6"/>
<rect x="690" y="650" width="1.5" height="1.6"/>
<rect x="684" y="644" width="1.5" height="1.6"/>
<rect x="74" y="479" width="1.5" height="1.6"/>
<rect x="68" y="491" width="1.5" height="1.6"/>
<rect x="87" y="493" width="1.5" height="1.6"/>
<rect x="56" y="498" width="1.5" height="1.6"/>
<rect x="62" y="497" width="1.5" height="1.6"/>
<rect x="46" y="505" width="1.5" height="1.6"/>
<rect x="87" y="504" width="1.5" height="1.6"/>
<rect x="62" y="521" width="1.5" height="1.6"/>
<rect x="66" y="521" width="1.5" height="1.6"/>
<rect x="76" y="518" width="1.5" height="1.6"/>
<rect x="76" y="525" width="1.5" height="1.6"/>
<rect x="66" y="539" width="1.5" height="3"/>
<rect x="85" y="548" width="1.5" height="1.6"/>
<rect x="85" y="558" width="1.5" height="1.6"/>
<rect x="175" y="535" width="1.5" height="1.6"/>
<rect x="224" y="479" width="3" height="5"/>
<rect x="213" y="486" width="1.5" height="1.6"/>
<rect x="221" y="491" width="1.5" height="1.6"/>
<rect x="201" y="495" width="1.5" height="1.6"/>
<rect x="223" y="504" width="1.5" height="1.6"/>
<rect x="213" y="516" width="1.5" height="1.6"/>
<rect x="203" y="519" width="1.5" height="1.6"/>
<rect x="199" y="523" width="1.5" height="1.6"/>
<rect x="217" y="536" width="1.5" height="4"/>
<rect x="221" y="537" width="1.5" height="1.6"/>
<rect x="205" y="539" width="1.5" height="1.6"/>
<rect x="227" y="541" width="1.5" height="1.6"/>
<rect x="197" y="544" width="1.5" height="1.6"/>
<rect x="211" y="555" width="1.5" height="1.6"/>
<rect x="213" y="558" width="1.5" height="1.6"/>
<rect x="199" y="559" width="1.5" height="4"/>
<rect x="219" y="560" width="1.5" height="1.6"/>
<rect x="225" y="559" width="1.5" height="4"/>
<rect x="58" y="578" width="1.5" height="1.6"/>
<rect x="74" y="579" width="1.5" height="1.6"/>
<rect x="58" y="600" width="1.5" height="1.6"/>
<rect x="83" y="599" width="1.5" height="1.6"/>
<rect x="78" y="604" width="1.5" height="1.6"/>
<rect x="74" y="608" width="1.5" height="1.6"/>
<rect x="64" y="613" width="1.5" height="1.6"/>
<rect x="68" y="613" width="1.5" height="1.6"/>
<rect x="74" y="618" width="1.5" height="1.6"/>
<rect x="78" y="620" width="1.5" height="1.6"/>
<rect x="68" y="621" width="1.5" height="3"/>
<rect x="68" y="625" width="1.5" height="1.6"/>
<rect x="109" y="614" width="1.5" height="1.6"/>
<rect x="135" y="602" width="1.5" height="1.6"/>
<rect x="135" y="608" width="1.5" height="1.6"/>
<rect x="62" y="639" width="1.5" height="1.6"/>
<rect x="50" y="659" width="1.5" height="1.6"/>
<rect x="50" y="662" width="1.5" height="4"/>
<rect x="62" y="657" width="1.5" height="1.6"/>
<rect x="72" y="662" width="1.5" height="4"/>
<rect x="76" y="655" width="1.5" height="1.6"/>
<rect x="81" y="655" width="1.5" height="1.6"/>
<rect x="70" y="673" width="1.5" height="1.6"/>
<rect x="70" y="678" width="1.5" height="1.6"/>
<rect x="50" y="677" width="1.5" height="4"/>
<rect x="60" y="689" width="1.5" height="1.6"/>
<rect x="70" y="692" width="1.5" height="1.6"/>
<rect x="105" y="690" width="1.5" height="1.6"/>
<rect x="121" y="697" width="1.5" height="1.6"/>
<rect x="85" y="701" width="1.5" height="1.6"/>
<rect x="54" y="703" width="1.5" height="1.6"/>
<rect x="54" y="707" width="1.5" height="1.6"/>
<rect x="54" y="711" width="1.5" height="1.6"/>
<rect x="60" y="711" width="1.5" height="1.6"/>
<rect x="74" y="706" width="1.5" height="1.6"/>
<rect x="80" y="718" width="1.5" height="6"/>
<rect x="70" y="726" width="1.5" height="1.6"/>
<rect x="42" y="728" width="1.5" height="5"/>
<rect x="54" y="731" width="1.5" height="1.6"/>
<rect x="147" y="684" width="1.5" height="1.6"/>
<rect x="147" y="694" width="1.5" height="1.6"/>
<rect x="197" y="596" width="1.5" height="4"/>
<rect x="197" y="609" width="1.5" height="1.6"/>
<rect x="217" y="599" width="1.5" height="1.6"/>
<rect x="225" y="596" width="1.5" height="4"/>
<rect x="219" y="614" width="1.5" height="1.6"/>
<rect x="223" y="614" width="1.5" height="1.6"/>
<rect x="229" y="630" width="1.5" height="1.6"/>
<rect x="213" y="635" width="1.5" height="4"/>
<rect x="197" y="637" width="1.5" height="1.6"/>
<rect x="229" y="648" width="1.5" height="1.6"/>
<rect x="195" y="706" width="1.5" height="1.6"/>
<rect x="205" y="704" width="1.5" height="1.6"/>
<rect x="205" y="710" width="1.5" height="1.6"/>
<rect x="213" y="706" width="1.5" height="1.6"/>
<rect x="215" y="718" width="1.5" height="1.6"/>
<rect x="209" y="722" width="1.5" height="1.6"/>
<rect x="213" y="723" width="1.5" height="4"/>
<rect x="173" y="731" width="1.5" height="1.6"/>
<rect x="225" y="731" width="1.5" height="1.6"/>
<rect x="205" y="539" width="1.5" height="1.6"/>
<rect x="217" y="536" width="1.5" height="1.6"/>
<rect x="221" y="538" width="1.5" height="1.6"/>
<rect x="211" y="555" width="1.5" height="1.6"/>
<rect x="225" y="559" width="1.5" height="1.6"/>
<rect x="225" y="568" width="1.5" height="1.6"/>
<rect x="215" y="572" width="1.5" height="1.6"/>
<rect x="225" y="596" width="1.5" height="3"/>
<rect x="217" y="599" width="1.5" height="1.6"/>
<rect x="219" y="614" width="1.5" height="1.6"/>
<rect x="223" y="614" width="1.5" height="1.6"/>
<rect x="229" y="630" width="1.5" height="1.6"/>
<rect x="213" y="635" width="1.5" height="4"/>
<rect x="229" y="648" width="1.5" height="1.6"/>
<rect x="201" y="672" width="1.5" height="1.6"/>
<rect x="217" y="669" width="1.5" height="1.6"/>
<rect x="205" y="705" width="1.5" height="1.6"/>
<rect x="213" y="706" width="1.5" height="1.6"/>
<rect x="425" y="629" width="1.5" height="1.6"/>
<rect x="244" y="566" width="1.5" height="1.6"/>
<rect x="250" y="569" width="1.5" height="1.6"/>
<rect x="257" y="566" width="1.5" height="3"/>
<rect x="265" y="568" width="1.5" height="1.6"/>
<rect x="276" y="568" width="6" height="1.6"/>
<rect x="286" y="569" width="1.5" height="1.6"/>
<rect x="299" y="567" width="1.5" height="1.6"/>
<rect x="303" y="567" width="1.5" height="1.6"/>
<rect x="306" y="567" width="1.5" height="1.6"/>
<rect x="284" y="550" width="3" height="1.6"/>
<rect x="294" y="550" width="1.5" height="1.6"/>
<rect x="300" y="550" width="1.5" height="1.6"/>
<rect x="309" y="549" width="4" height="1.6"/>
<rect x="243" y="555" width="1.5" height="1.6"/>
<rect x="249" y="555" width="1.5" height="1.6"/>
<rect x="250" y="519" width="1.5" height="1.6"/>
<rect x="434" y="520" width="1.5" height="4"/>
<rect x="482" y="591" width="1.5" height="4"/>
<rect x="425" y="629" width="1.5" height="1.6"/>
<rect x="483" y="591" width="1.5" height="4"/>
<rect x="501" y="584" width="1.5" height="4"/>
<rect x="499" y="593" width="1.5" height="1.6"/>
<rect x="493" y="639" width="1.5" height="1.6"/>
<rect x="491" y="683" width="1.5" height="1.6"/>
<rect x="427" y="715" width="1.5" height="1.6"/>
</g>
<g shape-rendering="crispEdges" fill="#fff">
<rect x="565" y="627" width="1" height="2"/>
<rect x="572" y="725" width="2" height="6"/>
<rect x="578" y="728" width="2" height="5"/>
</g>
<g shape-rendering="crispEdges">
<rect x="37" y="468" width="1" height="264" fill="#6c6c6c"/>
<rect x="77" y="468" width="1" height="264" fill="#6c6c6c"/>
<rect x="116" y="468" width="1" height="264" fill="#6c6c6c"/>
<rect x="156" y="468" width="1" height="264" fill="#6c6c6c"/>
<rect x="196" y="468" width="1" height="264" fill="#6c6c6c"/>
<rect x="236" y="468" width="1" height="264" fill="#6c6c6c"/>
<rect x="275" y="468" width="1" height="264" fill="#6c6c6c"/>
<rect x="315" y="468" width="1" height="264" fill="#6c6c6c"/>
<rect x="355" y="468" width="1" height="264" fill="#6c6c6c"/>
<rect x="395" y="468" width="1" height="264" fill="#6c6c6c"/>
<rect x="434" y="468" width="1" height="264" fill="#6c6c6c"/>
<rect x="474" y="468" width="1" height="264" fill="#6c6c6c"/>
<rect x="514" y="468" width="1" height="264" fill="#6c6c6c"/>
<rect x="554" y="468" width="1" height="264" fill="#6c6c6c"/>
<rect x="593" y="468" width="1" height="264" fill="#6c6c6c"/>
<rect x="633" y="468" width="1" height="264" fill="#6c6c6c"/>
<rect x="673" y="468" width="1" height="264" fill="#6c6c6c"/>
<rect x="713" y="468" width="1" height="264" fill="#6c6c6c"/>
<rect x="36" y="470" width="678" height="1" fill="#6c6c6c"/>
<rect x="36" y="494" width="678" height="1" fill="#6c6c6c"/>
<rect x="36" y="533" width="678" height="1" fill="#6c6c6c"/>
<rect x="36" y="572" width="678" height="1" fill="#6c6c6c"/>
<rect x="36" y="611" width="678" height="1" fill="#6c6c6c"/>
<rect x="36" y="651" width="678" height="1" fill="#6c6c6c"/>
<rect x="36" y="689" width="678" height="1" fill="#6c6c6c"/>
<rect x="36" y="729" width="678" height="1" fill="#6c6c6c"/>
</g>
<g transform="translate(0,442)">
<g shape-rendering="crispEdges">
<polyline points="227.5,118.5 250,118.75 275,118 300,115 325,110.5 350,105 375,100.5 390,97.5 412.5,92.5 430,90" fill="none" stroke="#9a9a9a" stroke-width="5.5" stroke-linejoin="round" stroke-linecap="butt" stroke-dasharray="3 2 5 3 2 4"/>
<polyline points="227.5,118.5 250,118.75 275,118 300,115" fill="none" stroke="#fff" stroke-width="2.6" stroke-linejoin="round" stroke-linecap="butt" stroke-dasharray="7 1.5 4 1 9 2"/>
<polyline points="300,115 325,110.5 350,105 375,100.5 390,97.5" fill="none" stroke="#fff" stroke-width="4.2" stroke-linejoin="round" stroke-linecap="butt" stroke-dasharray="11 1 6 1.5"/>
<polyline points="390,97.5 412.5,92.5 430,90" fill="none" stroke="#e8e8e8" stroke-width="2.4" stroke-linejoin="round" stroke-linecap="butt" stroke-dasharray="5 2 3 2 6 3"/>
<polyline points="141.5,244 143,246 147,246.8 151,246.3 155,245 158,243 161.25,240.6 167.5,236.25 173.75,231.25 180,226.9 186.25,223.1 190,221.7 200,221.5 212.5,220.4" fill="none" stroke="#fff" stroke-width="3.6" stroke-linejoin="round" stroke-linecap="butt" />
<polyline points="215,220 221,220" fill="none" stroke="#fff" stroke-width="3.4" stroke-linejoin="round" stroke-linecap="butt" />
<polyline points="175,239.4 179.4,239.4" fill="none" stroke="#fff" stroke-width="2.4" stroke-linejoin="round" stroke-linecap="butt" />
<polyline points="180.6,239.6 182.5,239.6" fill="none" stroke="#ddd" stroke-width="1.8" stroke-linejoin="round" stroke-linecap="butt" />
<polyline points="171.5,239 188,236.5 192,235 194.5,232 200,228 202,231.5 204,224 207.5,224.5 218,228" fill="none" stroke="#9a9a9a" stroke-width="1.6" stroke-linejoin="round" stroke-linecap="butt" stroke-dasharray="1.6 14.5"/>
<polyline points="230,222 250,223 275,223.5 300,222.5 325,220.5 350,218.75 375,216.25 395,213.5" fill="none" stroke="#fff" stroke-width="5.2" stroke-linejoin="round" stroke-linecap="butt" />
<polyline points="223,221 229,220.8" fill="none" stroke="#9a9a9a" stroke-width="1.4" stroke-linejoin="round" stroke-linecap="butt" />
<polyline points="246,215 262,215.5 280,217 305,219" fill="none" stroke="#f4f4f4" stroke-width="2.4" stroke-linejoin="round" stroke-linecap="butt" />
<polyline points="380,215.5 395,212.5 410,208.75 425,205 435,201.25" fill="none" stroke="#fff" stroke-width="3.2" stroke-linejoin="round" stroke-linecap="butt" />
<polyline points="435,201.25 447.5,195 455,188.75 461.25,181.25" fill="none" stroke="#fff" stroke-width="2.6" stroke-linejoin="round" stroke-linecap="butt" />
<polyline points="461.25,181.25 466.25,172.5 468.75,165" fill="none" stroke="#e0e0e0" stroke-width="2" stroke-linejoin="round" stroke-linecap="butt" />
<polyline points="468.75,165 471.25,155 473,145" fill="none" stroke="#c4c4c4" stroke-width="1.6" stroke-linejoin="round" stroke-linecap="butt" stroke-dasharray="4 1.5"/>
<rect x="470" y="152" width="2" height="3" fill="#fff"/>
<polyline points="380,216.5 395,214.5 430,208.75 455,202.5" fill="none" stroke="#fff" stroke-width="2.6" stroke-linejoin="round" stroke-linecap="butt" />
<polyline points="455,202.5 470,196.25 482.5,188.75 490,180 494.5,172.5 496.5,166.5" fill="none" stroke="#fff" stroke-width="2.2" stroke-linejoin="round" stroke-linecap="butt" />
<polyline points="83,283.5 89,282.5 100,281.3 110,280 116,278.8" fill="none" stroke="#fff" stroke-width="4.6" stroke-linejoin="round" stroke-linecap="butt" />
<polyline points="115,278.6 125,276.5 130,274.5" fill="none" stroke="#fff" stroke-width="3" stroke-linejoin="round" stroke-linecap="butt" />
<polyline points="88,280.5 96,278.5 108,277.5 116,276.5" fill="none" stroke="#fff" stroke-width="2" stroke-linejoin="round" stroke-linecap="butt" stroke-dasharray="2 3 1 4"/>
<polyline points="130,274.5 131.5,271 132.3,268" fill="none" stroke="#fff" stroke-width="2.2" stroke-linejoin="round" stroke-linecap="butt" />
<polyline points="138,268 139.5,272 142,276 142.3,279" fill="none" stroke="#fff" stroke-width="2" stroke-linejoin="round" stroke-linecap="butt" />
</g>
</g>
<g shape-rendering="crispEdges">
<polyline points="56.25,467 60,477.5 65,491.25 71.25,507.5 77.5,520 85,532.5 95,545 105,556.25 116.25,566.25 130,576.25 142.5,583.75 157.5,591.25 172.5,597.5 190,604.5 205,610 222,614.25" fill="none" stroke="#00ff00" stroke-width="1" stroke-linejoin="round" stroke-linecap="butt" />
<polyline points="222,614.25 237.5,618 255,622 272,626.25 300,630.75 325,635 350,639.5 375,642.5 395,646.25 412.5,648.75 430,651.25 450,654.5 462.5,657 470,659.5 473.25,662" fill="none" stroke="#00ff00" stroke-width="1" stroke-linejoin="round" stroke-linecap="butt" stroke-dasharray="1 2"/>
<polyline points="473.25,662 470,665 462.5,667 450,669 435,671.25 412.5,673.75 395,675.5 375,677.5 355,679.25 325,681.75 300,684.25 275,686.25 255,688.25 235,691.25 215,693.75 195,697.5 175,700.75 155,705 140,709.25 130,712 122,715.5 127.5,718.75 126.25,721.75 112.5,724.25 92.5,726.25 77.5,727" fill="none" stroke="#00ff00" stroke-width="1" stroke-linejoin="round" stroke-linecap="butt" />
</g>
<g shape-rendering="crispEdges">
<polyline points="37.5,727.5 75,727.5 92.5,725 104,723 115,721.25" fill="none" stroke="#0000ff" stroke-width="3" stroke-linejoin="round" stroke-linecap="butt" stroke-dasharray="1 1"/>
<polyline points="37.5,727.5 75,727.5 92.5,725 104,723 115,721.25" fill="none" stroke="#0000ff" stroke-width="1" stroke-linejoin="round" stroke-linecap="butt" />
<polyline points="145,679.5 165,679 180,676.25 192.5,674.25 205,672.5 220,670 235,667.5 247.5,665.5 280,665 305,663 340,661.25 357.5,660 375,657 392.5,654.5 412.5,650.5 425,646.25 440,640 450,635 457.5,630" fill="none" stroke="#0000ff" stroke-width="3" stroke-linejoin="round" stroke-linecap="butt" stroke-dasharray="1 1"/>
<polyline points="145,679.5 165,679 180,676.25 192.5,674.25 205,672.5 220,670 235,667.5 247.5,665.5 280,665 305,663 340,661.25 357.5,660 375,657 392.5,654.5 412.5,650.5 425,646.25 440,640 450,635 457.5,630" fill="none" stroke="#0000ff" stroke-width="1" stroke-linejoin="round" stroke-linecap="butt" />
<rect x="117" y="720" width="3" height="1" fill="#0000ff"/><rect x="118" y="719" width="1" height="3" fill="#0000ff"/>
<rect x="119" y="717" width="3" height="1" fill="#0000ff"/><rect x="120" y="716" width="1" height="3" fill="#0000ff"/>
<rect x="121" y="715" width="3" height="1" fill="#0000ff"/><rect x="122" y="714" width="1" height="3" fill="#0000ff"/>
<rect x="125" y="710" width="3" height="1" fill="#0000ff"/><rect x="126" y="709" width="1" height="3" fill="#0000ff"/>
<rect x="127" y="704" width="3" height="1" fill="#0000ff"/><rect x="128" y="703" width="1" height="3" fill="#0000ff"/>
<rect x="129" y="644" width="3" height="1" fill="#0000ff"/><rect x="130" y="643" width="1" height="3" fill="#0000ff"/>
<rect x="131" y="660" width="3" height="1" fill="#0000ff"/><rect x="132" y="659" width="1" height="3" fill="#0000ff"/>
<rect x="133" y="668" width="3" height="1" fill="#0000ff"/><rect x="134" y="667" width="1" height="3" fill="#0000ff"/>
<rect x="135" y="671" width="3" height="1" fill="#0000ff"/><rect x="136" y="670" width="1" height="3" fill="#0000ff"/>
<rect x="137" y="674" width="3" height="1" fill="#0000ff"/><rect x="138" y="673" width="1" height="3" fill="#0000ff"/>
<rect x="138" y="676" width="3" height="1" fill="#0000ff"/><rect x="139" y="675" width="1" height="3" fill="#0000ff"/>
<rect x="140" y="678" width="3" height="1" fill="#0000ff"/><rect x="141" y="677" width="1" height="3" fill="#0000ff"/>
<rect x="142" y="678" width="3" height="1" fill="#0000ff"/><rect x="143" y="677" width="1" height="3" fill="#0000ff"/>
<rect x="459" y="628" width="3" height="1" fill="#0000ff"/><rect x="460" y="627" width="1" height="3" fill="#0000ff"/>
<rect x="461" y="626" width="3" height="1" fill="#0000ff"/><rect x="462" y="625" width="1" height="3" fill="#0000ff"/>
<rect x="463" y="624" width="3" height="1" fill="#0000ff"/><rect x="464" y="623" width="1" height="3" fill="#0000ff"/>
<rect x="465" y="620" width="3" height="1" fill="#0000ff"/><rect x="466" y="619" width="1" height="3" fill="#0000ff"/>
<rect x="467" y="617" width="3" height="1" fill="#0000ff"/><rect x="468" y="616" width="1" height="3" fill="#0000ff"/>
<rect x="469" y="610" width="3" height="1" fill="#0000ff"/><rect x="470" y="609" width="1" height="3" fill="#0000ff"/>
<rect x="471" y="604" width="3" height="1" fill="#0000ff"/><rect x="472" y="603" width="1" height="3" fill="#0000ff"/>
<rect x="473" y="589" width="3" height="1" fill="#0000ff"/><rect x="474" y="588" width="1" height="3" fill="#0000ff"/>
</g>
<g shape-rendering="crispEdges">
<rect x="35" y="467" width="680" height="1" fill="#ffff00"/>
<rect x="35" y="732" width="680" height="1" fill="#ffff00"/>
<rect x="35" y="467" width="1" height="266" fill="#ffff00"/>
<rect x="714" y="467" width="1" height="266" fill="#ffff00"/>
</g>
<text x="31" y="475" fill="#ffff80" text-anchor="end" textLength="19.5" lengthAdjust="spacingAndGlyphs">760</text>
<text x="6" y="488" fill="#ffff80" textLength="15.5" lengthAdjust="spacingAndGlyphs">km</text>
<text x="31" y="500" fill="#ffff80" text-anchor="end" textLength="19.5" lengthAdjust="spacingAndGlyphs">700</text>
<text x="31" y="539" fill="#ffff80" text-anchor="end" textLength="19.5" lengthAdjust="spacingAndGlyphs">600</text>
<text x="31" y="578" fill="#ffff80" text-anchor="end" textLength="19.5" lengthAdjust="spacingAndGlyphs">500</text>
<text x="31" y="617" fill="#ffff80" text-anchor="end" textLength="19.5" lengthAdjust="spacingAndGlyphs">400</text>
<text x="31" y="657" fill="#ffff80" text-anchor="end" textLength="19.5" lengthAdjust="spacingAndGlyphs">300</text>
<text x="31" y="695" fill="#ffff80" text-anchor="end" textLength="19.5" lengthAdjust="spacingAndGlyphs">200</text>
<text x="31" y="735" fill="#ffff80" text-anchor="end" textLength="19.5" lengthAdjust="spacingAndGlyphs">100</text>
<text x="37.8" y="748" fill="#ffff80" text-anchor="middle">1</text>
<text x="77.8" y="748" fill="#ffff80" text-anchor="middle">2</text>
<text x="116.8" y="748" fill="#ffff80" text-anchor="middle">3</text>
<text x="156.8" y="748" fill="#ffff80" text-anchor="middle">4</text>
<text x="196.8" y="748" fill="#ffff80" text-anchor="middle">5</text>
<text x="236.8" y="748" fill="#ffff80" text-anchor="middle">6</text>
<text x="275.8" y="748" fill="#ffff80" text-anchor="middle">7</text>
<text x="315.8" y="748" fill="#ffff80" text-anchor="middle">8</text>
<text x="355.8" y="748" fill="#ffff80" text-anchor="middle">9</text>
<text x="396.6" y="748" fill="#ffff80" text-anchor="middle" textLength="13" lengthAdjust="spacingAndGlyphs">10</text>
<text x="435.6" y="748" fill="#ffff80" text-anchor="middle" textLength="13" lengthAdjust="spacingAndGlyphs">11</text>
<text x="475.6" y="748" fill="#ffff80" text-anchor="middle" textLength="13" lengthAdjust="spacingAndGlyphs">12</text>
<text x="515.6" y="748" fill="#ffff80" text-anchor="middle" textLength="13" lengthAdjust="spacingAndGlyphs">13</text>
<text x="555.6" y="748" fill="#ffff80" text-anchor="middle" textLength="13" lengthAdjust="spacingAndGlyphs">14</text>
<text x="594.6" y="748" fill="#ffff80" text-anchor="middle" textLength="13" lengthAdjust="spacingAndGlyphs">15</text>
<text x="634.6" y="748" fill="#ffff80" text-anchor="middle" textLength="13" lengthAdjust="spacingAndGlyphs">16</text>
<text x="674.6" y="748" fill="#ffff80" text-anchor="middle" textLength="13" lengthAdjust="spacingAndGlyphs">17</text>
<text x="721.3" y="748" fill="#ffff80" text-anchor="end" textLength="13.4" lengthAdjust="spacingAndGlyphs">18</text>
<text x="683.8" y="752" fill="#ffff80" textLength="24.4" lengthAdjust="spacingAndGlyphs">MHz</text>
<g shape-rendering="crispEdges">
<rect x="727" y="468" width="165" height="1" fill="#6cf07c"/>
<rect x="727" y="494" width="165" height="1" fill="#6cf07c"/>
<rect x="727" y="679" width="165" height="1" fill="#6cf07c"/>
<rect x="727" y="468" width="1" height="212" fill="#6cf07c"/>
<rect x="891" y="468" width="1" height="212" fill="#6cf07c"/>
</g>
<text x="784" y="488" fill="#ffff80" textLength="50" lengthAdjust="spacingAndGlyphs" font-weight="400">AIP output</text>
<text x="732.5" y="514" fill="#ffff80" textLength="25.5" lengthAdjust="spacingAndGlyphs" font-weight="400">hmF2</text>
<text x="785.5" y="514" fill="#ffff80" textLength="17.8" lengthAdjust="spacingAndGlyphs" font-weight="400">259</text>
<text x="833" y="514" fill="#ffff80" textLength="13.5" lengthAdjust="spacingAndGlyphs" font-weight="400">km</text>
<text x="732.5" y="527" fill="#ffff80" textLength="20" lengthAdjust="spacingAndGlyphs" font-weight="400">foF2</text>
<text x="792" y="527" fill="#ffff80" textLength="20.4" lengthAdjust="spacingAndGlyphs" font-weight="400">12.0</text>
<text x="833" y="527" fill="#ffff80" textLength="21.3" lengthAdjust="spacingAndGlyphs" font-weight="400">MHz</text>
<text x="732.5" y="540" fill="#ffff80" textLength="19.5" lengthAdjust="spacingAndGlyphs" font-weight="400">foF1</text>
<text x="792" y="540" fill="#ffff80" textLength="20.4" lengthAdjust="spacingAndGlyphs" font-weight="400">00.0</text>
<text x="833" y="540" fill="#ffff80" textLength="21.3" lengthAdjust="spacingAndGlyphs" font-weight="400">MHz</text>
<text x="866" y="540" fill="#ffff80" textLength="20" lengthAdjust="spacingAndGlyphs" font-weight="400">[PN]</text>
<text x="732.5" y="553" fill="#ffff80" textLength="24.5" lengthAdjust="spacingAndGlyphs" font-weight="400">hmF1</text>
<text x="785.5" y="553" fill="#ffff80" textLength="8.5" lengthAdjust="spacingAndGlyphs" font-weight="400">---</text>
<text x="833" y="553" fill="#ffff80" textLength="13.5" lengthAdjust="spacingAndGlyphs" font-weight="400">km</text>
<text x="732.5" y="566" fill="#ffff80" textLength="12" lengthAdjust="spacingAndGlyphs" font-weight="400">D1</text>
<text x="792" y="566" fill="#ffff80" textLength="20.4" lengthAdjust="spacingAndGlyphs" font-weight="400">00.0</text>
<text x="732.5" y="579" fill="#ffff80" textLength="14.5" lengthAdjust="spacingAndGlyphs" font-weight="400">foE</text>
<text x="798" y="579" fill="#ffff80" textLength="14.4" lengthAdjust="spacingAndGlyphs" font-weight="400">3.3</text>
<text x="833" y="579" fill="#ffff80" textLength="21.3" lengthAdjust="spacingAndGlyphs" font-weight="400">MHz</text>
<text x="732.5" y="592" fill="#ffff80" textLength="19.5" lengthAdjust="spacingAndGlyphs" font-weight="400">hmE</text>
<text x="785.5" y="592" fill="#ffff80" textLength="17.8" lengthAdjust="spacingAndGlyphs" font-weight="400">110</text>
<text x="833" y="592" fill="#ffff80" textLength="13.5" lengthAdjust="spacingAndGlyphs" font-weight="400">km</text>
<text x="732.5" y="605" fill="#ffff80" textLength="18.5" lengthAdjust="spacingAndGlyphs" font-weight="400">ymE</text>
<text x="792" y="605" fill="#ffff80" textLength="11.3" lengthAdjust="spacingAndGlyphs" font-weight="400">20</text>
<text x="833" y="605" fill="#ffff80" textLength="13.5" lengthAdjust="spacingAndGlyphs" font-weight="400">km</text>
<text x="732.5" y="618" fill="#ffff80" textLength="23.5" lengthAdjust="spacingAndGlyphs" font-weight="400">h_vE</text>
<text x="785.5" y="618" fill="#ffff80" textLength="17.8" lengthAdjust="spacingAndGlyphs" font-weight="400">119</text>
<text x="833" y="618" fill="#ffff80" textLength="13.5" lengthAdjust="spacingAndGlyphs" font-weight="400">km</text>
<text x="732.5" y="631" fill="#ffff80" textLength="31.5" lengthAdjust="spacingAndGlyphs" font-weight="400">Ewidth</text>
<text x="792" y="631" fill="#ffff80" textLength="11.3" lengthAdjust="spacingAndGlyphs" font-weight="400">19</text>
<text x="833" y="631" fill="#ffff80" textLength="13.5" lengthAdjust="spacingAndGlyphs" font-weight="400">km</text>
<text x="732.5" y="644" fill="#ffff80" textLength="41.5" lengthAdjust="spacingAndGlyphs" font-weight="400">DelN_vE</text>
<text x="792" y="644" fill="#ffff80" textLength="18.7" lengthAdjust="spacingAndGlyphs" font-weight="400">00.1</text>
<text x="833" y="644" fill="#ffff80" textLength="28.8" lengthAdjust="spacingAndGlyphs" font-weight="400">m^(-3)</text>
<text x="732.5" y="657" fill="#ffff80" textLength="12.5" lengthAdjust="spacingAndGlyphs" font-weight="400">B0</text>
<text x="785.5" y="657" fill="#ffff80" textLength="27" lengthAdjust="spacingAndGlyphs" font-weight="400">067.0</text>
<text x="833" y="657" fill="#ffff80" textLength="13.5" lengthAdjust="spacingAndGlyphs" font-weight="400">km</text>
<text x="732.5" y="670" fill="#ffff80" textLength="11.5" lengthAdjust="spacingAndGlyphs" font-weight="400">B1</text>
<text x="792" y="670" fill="#ffff80" textLength="20.4" lengthAdjust="spacingAndGlyphs" font-weight="400">02.0</text>
<text x="732.5" y="683" fill="#ffff80" textLength="43" lengthAdjust="spacingAndGlyphs" font-weight="400">TEC[Bot]</text>
<text x="785.5" y="683" fill="#ffff80" textLength="27" lengthAdjust="spacingAndGlyphs" font-weight="400">010.4</text>
<text x="833" y="683" fill="#ffff80" textLength="27" lengthAdjust="spacingAndGlyphs" font-weight="400">TECU</text>
<text x="732.5" y="696" fill="#ffff80" textLength="45.5" lengthAdjust="spacingAndGlyphs" font-weight="400">TEC[Top]</text>
<text x="785.5" y="696" fill="#ffff80" textLength="27" lengthAdjust="spacingAndGlyphs" font-weight="400">018.8</text>
<text x="833" y="696" fill="#ffff80" textLength="27" lengthAdjust="spacingAndGlyphs" font-weight="400">TECU</text>
</svg></body></html>
